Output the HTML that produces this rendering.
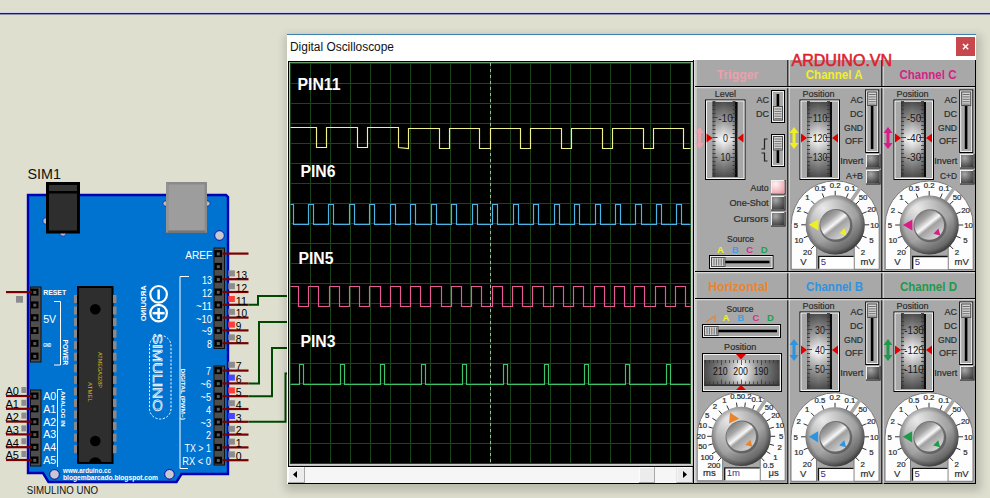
<!DOCTYPE html>
<html><head><meta charset="utf-8"><style>
html,body{margin:0;padding:0;background:#dfdfd0;overflow:hidden;}
svg{display:block;font-family:"Liberation Sans", sans-serif;}
</style></head><body>
<svg width="990" height="498" viewBox="0 0 990 498">
<defs>
<linearGradient id="cylV" x1="0" y1="0" x2="0" y2="1">
<stop offset="0" stop-color="#505050"/><stop offset="0.28" stop-color="#a8a8a8"/><stop offset="0.5" stop-color="#ffffff"/><stop offset="0.72" stop-color="#a8a8a8"/><stop offset="1" stop-color="#505050"/>
</linearGradient>
<linearGradient id="cylH" x1="0" y1="0" x2="1" y2="0">
<stop offset="0" stop-color="#000" stop-opacity="0.45"/><stop offset="0.15" stop-color="#000" stop-opacity="0.1"/><stop offset="0.45" stop-color="#000" stop-opacity="0"/><stop offset="0.8" stop-color="#000" stop-opacity="0.12"/><stop offset="0.91" stop-color="#000" stop-opacity="0.35"/><stop offset="0.92" stop-color="#000" stop-opacity="0.9"/><stop offset="1" stop-color="#000" stop-opacity="0.9"/>
</linearGradient>
<linearGradient id="cylH2" x1="0" y1="0" x2="1" y2="0">
<stop offset="0" stop-color="#4a4a4a"/><stop offset="0.3" stop-color="#9a9a9a"/><stop offset="0.5" stop-color="#ffffff"/><stop offset="0.7" stop-color="#9a9a9a"/><stop offset="1" stop-color="#4a4a4a"/>
</linearGradient>
<linearGradient id="cylV2" x1="0" y1="0" x2="0" y2="1">
<stop offset="0" stop-color="#000" stop-opacity="0.12"/><stop offset="0.25" stop-color="#000" stop-opacity="0.02"/><stop offset="0.5" stop-color="#000" stop-opacity="0"/><stop offset="0.8" stop-color="#000" stop-opacity="0.06"/><stop offset="1" stop-color="#000" stop-opacity="0.22"/>
</linearGradient>
<radialGradient id="knobO" cx="0.4" cy="0.35" r="0.75" fx="0.3" fy="0.22">
<stop offset="0" stop-color="#f0f0f0"/><stop offset="0.45" stop-color="#b8b8b8"/><stop offset="0.85" stop-color="#8a8a8a"/><stop offset="1" stop-color="#5e5e5e"/>
</radialGradient>
<radialGradient id="knobRing" cx="0.5" cy="0.5" r="0.5" fx="0.5" fy="0.5">
<stop offset="0.82" stop-color="#000" stop-opacity="0"/><stop offset="1" stop-color="#000" stop-opacity="0.3"/>
</radialGradient>
<linearGradient id="knobShade" x1="0.2" y1="0.1" x2="0.8" y2="0.95">
<stop offset="0" stop-color="#fff" stop-opacity="0.15"/><stop offset="0.55" stop-color="#000" stop-opacity="0"/><stop offset="1" stop-color="#000" stop-opacity="0.35"/>
</linearGradient>
<linearGradient id="knobI" x1="0.1" y1="0" x2="0.9" y2="1">
<stop offset="0" stop-color="#6a6a6a"/><stop offset="0.3" stop-color="#a8a8a8"/><stop offset="0.47" stop-color="#f8f8f8"/><stop offset="0.56" stop-color="#a0a0a0"/><stop offset="0.8" stop-color="#c8c8c8"/><stop offset="1" stop-color="#e0e0e0"/>
</linearGradient>
<radialGradient id="btn" cx="0.3" cy="0.25" r="0.9">
<stop offset="0" stop-color="#a8a8a8"/><stop offset="0.6" stop-color="#606060"/><stop offset="1" stop-color="#383838"/>
</radialGradient>
<radialGradient id="btnP" cx="0.3" cy="0.25" r="0.9">
<stop offset="0" stop-color="#fff4f4"/><stop offset="0.6" stop-color="#f4c0c4"/><stop offset="1" stop-color="#e89aa0"/>
</radialGradient>
<filter id="sh" x="-5%" y="-5%" width="110%" height="112%"><feGaussianBlur stdDeviation="4"/></filter>
</defs>
<rect x="0" y="0" width="990" height="498" fill="#dfdfd0" />
<rect x="0" y="12" width="990" height="1" fill="#d0d0ee" />
<rect x="0" y="13" width="990" height="1.4" fill="#18186c" />
<polygon points="28,195 226,195 228,197 228,474 181.5,474 176.5,482 48.5,482 43,473 28,473" fill="#0073d0" stroke="#0000b4" stroke-width="2.4"/>
<circle cx="219.5" cy="235.5" r="4.8" fill="#c8c8d0" stroke="#0000a0" stroke-width="0.9"/>
<circle cx="54.5" cy="474.4" r="4.8" fill="#c8c8d0" stroke="#0000a0" stroke-width="0.9"/>
<circle cx="169.5" cy="474.3" r="4.8" fill="#c8c8d0" stroke="#0000a0" stroke-width="0.9"/>
<circle cx="46" cy="221" r="3.2" fill="#b8b8c0" stroke="#0000a0" stroke-width="0.6"/>
<circle cx="63" cy="233" r="3.2" fill="#b8b8c0" stroke="#0000a0" stroke-width="0.6"/>
<circle cx="165.5" cy="203.5" r="2.6" fill="#b8b8c0" stroke="#0000a0" stroke-width="0.6"/>
<circle cx="207.5" cy="203.5" r="2.6" fill="#b8b8c0" stroke="#0000a0" stroke-width="0.6"/>
<rect x="46" y="182" width="34" height="51.5" fill="#000" />
<rect x="49" y="185" width="28" height="6" fill="#343434" />
<rect x="49" y="193.5" width="28" height="37" fill="#2e2e2e" />
<polygon points="166,182 207,182 207,233 166,233" fill="#8a8a8a"/>
<polygon points="168.5,184.5 204.5,184.5 204.5,230.5 168.5,230.5" fill="#9d9d9d"/>
<polygon points="166,233 168.5,230.5 204.5,230.5 207,233" fill="#767676"/>
<polygon points="166,182 168.5,184.5 168.5,230.5 166,233" fill="#939393"/>
<rect x="78" y="287" width="34.5" height="176" fill="#2e2e2e" stroke="#000" stroke-width="2"/>
<rect x="74" y="295.0" width="3" height="8" fill="#8c8888" />
<rect x="113" y="295.0" width="3.5" height="8" fill="#8c8888" />
<rect x="74" y="306.55" width="3" height="8" fill="#8c8888" />
<rect x="113" y="306.55" width="3.5" height="8" fill="#8c8888" />
<rect x="74" y="318.1" width="3" height="8" fill="#8c8888" />
<rect x="113" y="318.1" width="3.5" height="8" fill="#8c8888" />
<rect x="74" y="329.65" width="3" height="8" fill="#8c8888" />
<rect x="113" y="329.65" width="3.5" height="8" fill="#8c8888" />
<rect x="74" y="341.2" width="3" height="8" fill="#8c8888" />
<rect x="113" y="341.2" width="3.5" height="8" fill="#8c8888" />
<rect x="74" y="352.75" width="3" height="8" fill="#8c8888" />
<rect x="113" y="352.75" width="3.5" height="8" fill="#8c8888" />
<rect x="74" y="364.3" width="3" height="8" fill="#8c8888" />
<rect x="113" y="364.3" width="3.5" height="8" fill="#8c8888" />
<rect x="74" y="375.85" width="3" height="8" fill="#8c8888" />
<rect x="113" y="375.85" width="3.5" height="8" fill="#8c8888" />
<rect x="74" y="387.4" width="3" height="8" fill="#8c8888" />
<rect x="113" y="387.4" width="3.5" height="8" fill="#8c8888" />
<rect x="74" y="398.95" width="3" height="8" fill="#8c8888" />
<rect x="113" y="398.95" width="3.5" height="8" fill="#8c8888" />
<rect x="74" y="410.5" width="3" height="8" fill="#8c8888" />
<rect x="113" y="410.5" width="3.5" height="8" fill="#8c8888" />
<rect x="74" y="422.05" width="3" height="8" fill="#8c8888" />
<rect x="113" y="422.05" width="3.5" height="8" fill="#8c8888" />
<rect x="74" y="433.6" width="3" height="8" fill="#8c8888" />
<rect x="113" y="433.6" width="3.5" height="8" fill="#8c8888" />
<rect x="74" y="445.15" width="3" height="8" fill="#8c8888" />
<rect x="113" y="445.15" width="3.5" height="8" fill="#8c8888" />
<circle cx="95.3" cy="309.3" r="5.3" fill="#000"/>
<circle cx="95.3" cy="441" r="5.3" fill="#000"/>
<path d="M89,463.5 A6.3,6.3 0 0 1 101.6,463.5 Z" fill="#000"/>
<text x="0" y="0" font-size="4.5" fill="#c8b820" font-weight="normal" textLength="20" lengthAdjust="spacingAndGlyphs" transform="translate(88,382) rotate(90)">ATMEL</text>
<text x="0" y="0" font-size="4.5" fill="#c8b820" font-weight="normal" textLength="36" lengthAdjust="spacingAndGlyphs" transform="translate(97.5,352) rotate(90)">ATMEGA328P</text>
<rect x="214" y="248" width="10.5" height="100.5" fill="#4e4e4e" stroke="#111" stroke-width="1"/>
<rect x="214.5" y="250.1" width="7.5" height="7" fill="#000" />
<rect x="216.8" y="252.4" width="3" height="3" fill="#5a5a5a" />
<rect x="214.5" y="262.9" width="7.5" height="7" fill="#000" />
<rect x="216.8" y="265.2" width="3" height="3" fill="#5a5a5a" />
<rect x="214.5" y="275.7" width="7.5" height="7" fill="#000" />
<rect x="216.8" y="278.0" width="3" height="3" fill="#5a5a5a" />
<rect x="214.5" y="288.5" width="7.5" height="7" fill="#000" />
<rect x="216.8" y="290.8" width="3" height="3" fill="#5a5a5a" />
<rect x="214.5" y="301.3" width="7.5" height="7" fill="#000" />
<rect x="216.8" y="303.6" width="3" height="3" fill="#5a5a5a" />
<rect x="214.5" y="314.1" width="7.5" height="7" fill="#000" />
<rect x="216.8" y="316.40000000000003" width="3" height="3" fill="#5a5a5a" />
<rect x="214.5" y="326.9" width="7.5" height="7" fill="#000" />
<rect x="216.8" y="329.2" width="3" height="3" fill="#5a5a5a" />
<rect x="214.5" y="339.7" width="7.5" height="7" fill="#000" />
<rect x="216.8" y="342.0" width="3" height="3" fill="#5a5a5a" />
<rect x="214" y="366" width="10.5" height="99" fill="#4e4e4e" stroke="#111" stroke-width="1"/>
<rect x="214.5" y="367.1" width="7.5" height="7" fill="#000" />
<rect x="216.8" y="369.40000000000003" width="3" height="3" fill="#5a5a5a" />
<rect x="214.5" y="379.90000000000003" width="7.5" height="7" fill="#000" />
<rect x="216.8" y="382.20000000000005" width="3" height="3" fill="#5a5a5a" />
<rect x="214.5" y="392.70000000000005" width="7.5" height="7" fill="#000" />
<rect x="216.8" y="395.00000000000006" width="3" height="3" fill="#5a5a5a" />
<rect x="214.5" y="405.5" width="7.5" height="7" fill="#000" />
<rect x="216.8" y="407.8" width="3" height="3" fill="#5a5a5a" />
<rect x="214.5" y="418.3" width="7.5" height="7" fill="#000" />
<rect x="216.8" y="420.6" width="3" height="3" fill="#5a5a5a" />
<rect x="214.5" y="431.1" width="7.5" height="7" fill="#000" />
<rect x="216.8" y="433.40000000000003" width="3" height="3" fill="#5a5a5a" />
<rect x="214.5" y="443.90000000000003" width="7.5" height="7" fill="#000" />
<rect x="216.8" y="446.20000000000005" width="3" height="3" fill="#5a5a5a" />
<rect x="214.5" y="456.70000000000005" width="7.5" height="7" fill="#000" />
<rect x="216.8" y="459.00000000000006" width="3" height="3" fill="#5a5a5a" />
<rect x="30.5" y="287" width="10.5" height="75" fill="#4e4e4e" stroke="#111" stroke-width="1"/>
<rect x="31.0" y="288.6" width="7.5" height="7" fill="#000" />
<rect x="33.3" y="290.90000000000003" width="3" height="3" fill="#5a5a5a" />
<rect x="31.0" y="301.40000000000003" width="7.5" height="7" fill="#000" />
<rect x="33.3" y="303.70000000000005" width="3" height="3" fill="#5a5a5a" />
<rect x="31.0" y="314.20000000000005" width="7.5" height="7" fill="#000" />
<rect x="33.3" y="316.50000000000006" width="3" height="3" fill="#5a5a5a" />
<rect x="31.0" y="327.0" width="7.5" height="7" fill="#000" />
<rect x="33.3" y="329.3" width="3" height="3" fill="#5a5a5a" />
<rect x="31.0" y="339.8" width="7.5" height="7" fill="#000" />
<rect x="33.3" y="342.1" width="3" height="3" fill="#5a5a5a" />
<rect x="31.0" y="352.6" width="7.5" height="7" fill="#000" />
<rect x="33.3" y="354.90000000000003" width="3" height="3" fill="#5a5a5a" />
<rect x="30.5" y="390" width="10.5" height="76" fill="#4e4e4e" stroke="#111" stroke-width="1"/>
<rect x="31.0" y="392.5" width="7.5" height="7" fill="#000" />
<rect x="33.3" y="394.8" width="3" height="3" fill="#5a5a5a" />
<rect x="31.0" y="405.3" width="7.5" height="7" fill="#000" />
<rect x="33.3" y="407.6" width="3" height="3" fill="#5a5a5a" />
<rect x="31.0" y="418.1" width="7.5" height="7" fill="#000" />
<rect x="33.3" y="420.40000000000003" width="3" height="3" fill="#5a5a5a" />
<rect x="31.0" y="430.9" width="7.5" height="7" fill="#000" />
<rect x="33.3" y="433.2" width="3" height="3" fill="#5a5a5a" />
<rect x="31.0" y="443.7" width="7.5" height="7" fill="#000" />
<rect x="33.3" y="446.0" width="3" height="3" fill="#5a5a5a" />
<rect x="31.0" y="456.5" width="7.5" height="7" fill="#000" />
<rect x="33.3" y="458.8" width="3" height="3" fill="#5a5a5a" />
<rect x="222.5" y="252.5" width="26" height="2.2" fill="#780000" />
<rect x="222.5" y="278.09999999999997" width="26" height="2.2" fill="#780000" />
<rect x="222.5" y="290.9" width="26" height="2.2" fill="#780000" />
<rect x="222.5" y="303.7" width="26" height="2.2" fill="#780000" />
<rect x="222.5" y="316.5" width="26" height="2.2" fill="#780000" />
<rect x="222.5" y="329.29999999999995" width="26" height="2.2" fill="#780000" />
<rect x="222.5" y="342.09999999999997" width="26" height="2.2" fill="#780000" />
<rect x="222.5" y="369.5" width="26" height="2.2" fill="#780000" />
<rect x="222.5" y="382.3" width="26" height="2.2" fill="#780000" />
<rect x="222.5" y="395.1" width="26" height="2.2" fill="#780000" />
<rect x="222.5" y="407.9" width="26" height="2.2" fill="#780000" />
<rect x="222.5" y="420.7" width="26" height="2.2" fill="#780000" />
<rect x="222.5" y="433.5" width="26" height="2.2" fill="#780000" />
<rect x="222.5" y="446.3" width="26" height="2.2" fill="#780000" />
<rect x="222.5" y="459.1" width="26" height="2.2" fill="#780000" />
<rect x="228.3" y="270.4" width="6.6" height="6" fill="#8c8c8c" />
<text x="235.8" y="278.9" font-size="10.5" fill="#000" text-anchor="start" font-weight="normal" textLength="11.2" lengthAdjust="spacingAndGlyphs" >13</text>
<rect x="228.3" y="283.2" width="6.6" height="6" fill="#8c8c8c" />
<text x="235.8" y="291.7" font-size="10.5" fill="#000" text-anchor="start" font-weight="normal" textLength="11.2" lengthAdjust="spacingAndGlyphs" >12</text>
<rect x="228.3" y="296.0" width="6.6" height="6" fill="#ff3c3c" />
<text x="235.8" y="304.5" font-size="10.5" fill="#000" text-anchor="start" font-weight="normal" textLength="11.2" lengthAdjust="spacingAndGlyphs" >11</text>
<rect x="228.3" y="308.8" width="6.6" height="6" fill="#8c8c8c" />
<text x="235.8" y="317.3" font-size="10.5" fill="#000" text-anchor="start" font-weight="normal" textLength="11.2" lengthAdjust="spacingAndGlyphs" >10</text>
<rect x="228.3" y="321.59999999999997" width="6.6" height="6" fill="#ff3c3c" />
<text x="235.8" y="330.09999999999997" font-size="10.5" fill="#000" text-anchor="start" font-weight="normal" textLength="5.6" lengthAdjust="spacingAndGlyphs" >9</text>
<rect x="228.3" y="334.4" width="6.6" height="6" fill="#8c8c8c" />
<text x="235.8" y="342.9" font-size="10.5" fill="#000" text-anchor="start" font-weight="normal" textLength="5.6" lengthAdjust="spacingAndGlyphs" >8</text>
<rect x="228.3" y="361.8" width="6.6" height="6" fill="#8c8c8c" />
<text x="235.8" y="370.3" font-size="10.5" fill="#000" text-anchor="start" font-weight="normal" >7</text>
<rect x="228.3" y="374.6" width="6.6" height="6" fill="#4646ff" />
<text x="235.8" y="383.1" font-size="10.5" fill="#000" text-anchor="start" font-weight="normal" >6</text>
<rect x="228.3" y="387.40000000000003" width="6.6" height="6" fill="#ff3c3c" />
<text x="235.8" y="395.90000000000003" font-size="10.5" fill="#000" text-anchor="start" font-weight="normal" >5</text>
<rect x="228.3" y="400.2" width="6.6" height="6" fill="#8c8c8c" />
<text x="235.8" y="408.7" font-size="10.5" fill="#000" text-anchor="start" font-weight="normal" >4</text>
<rect x="228.3" y="413.0" width="6.6" height="6" fill="#4646ff" />
<text x="235.8" y="421.5" font-size="10.5" fill="#000" text-anchor="start" font-weight="normal" >3</text>
<rect x="228.3" y="425.8" width="6.6" height="6" fill="#8c8c8c" />
<text x="235.8" y="434.3" font-size="10.5" fill="#000" text-anchor="start" font-weight="normal" >2</text>
<rect x="228.3" y="438.6" width="6.6" height="6" fill="#8c8c8c" />
<text x="235.8" y="447.1" font-size="10.5" fill="#000" text-anchor="start" font-weight="normal" >1</text>
<rect x="228.3" y="451.40000000000003" width="6.6" height="6" fill="#8c8c8c" />
<text x="235.8" y="459.90000000000003" font-size="10.5" fill="#000" text-anchor="start" font-weight="normal" >0</text>
<rect x="6" y="291.0" width="26" height="2.2" fill="#780000" />
<rect x="16" y="296" width="7" height="6.7" fill="#8c8c8c" />
<rect x="6" y="394.9" width="26" height="2.2" fill="#780000" />
<rect x="21.4" y="387.0" width="5" height="6" fill="#8c8c8c" />
<text x="5.5" y="395.4" font-size="11" fill="#000" text-anchor="start" font-weight="normal" textLength="13.5" lengthAdjust="spacingAndGlyphs" >A0</text>
<rect x="6" y="407.7" width="26" height="2.2" fill="#780000" />
<rect x="21.4" y="399.8" width="5" height="6" fill="#8c8c8c" />
<text x="5.5" y="408.2" font-size="11" fill="#000" text-anchor="start" font-weight="normal" textLength="13.5" lengthAdjust="spacingAndGlyphs" >A1</text>
<rect x="6" y="420.5" width="26" height="2.2" fill="#780000" />
<rect x="21.4" y="412.6" width="5" height="6" fill="#8c8c8c" />
<text x="5.5" y="421.0" font-size="11" fill="#000" text-anchor="start" font-weight="normal" textLength="13.5" lengthAdjust="spacingAndGlyphs" >A2</text>
<rect x="6" y="433.29999999999995" width="26" height="2.2" fill="#780000" />
<rect x="21.4" y="425.4" width="5" height="6" fill="#8c8c8c" />
<text x="5.5" y="433.79999999999995" font-size="11" fill="#000" text-anchor="start" font-weight="normal" textLength="13.5" lengthAdjust="spacingAndGlyphs" >A3</text>
<rect x="6" y="446.09999999999997" width="26" height="2.2" fill="#780000" />
<rect x="21.4" y="438.2" width="5" height="6" fill="#8c8c8c" />
<text x="5.5" y="446.59999999999997" font-size="11" fill="#000" text-anchor="start" font-weight="normal" textLength="13.5" lengthAdjust="spacingAndGlyphs" >A4</text>
<rect x="6" y="458.9" width="26" height="2.2" fill="#780000" />
<rect x="21.4" y="451.0" width="5" height="6" fill="#8c8c8c" />
<text x="5.5" y="459.4" font-size="11" fill="#000" text-anchor="start" font-weight="normal" textLength="13.5" lengthAdjust="spacingAndGlyphs" >A5</text>
<text x="212.2" y="259.1" font-size="10" fill="#ffffff" text-anchor="end" font-weight="normal" textLength="27" lengthAdjust="spacingAndGlyphs" >AREF</text>
<text x="212" y="284.2" font-size="10" fill="#ffffff" text-anchor="end" font-weight="normal" textLength="10" lengthAdjust="spacingAndGlyphs" >13</text>
<text x="212" y="297.0" font-size="10" fill="#ffffff" text-anchor="end" font-weight="normal" textLength="10" lengthAdjust="spacingAndGlyphs" >12</text>
<text x="212" y="309.8" font-size="10" fill="#ffffff" text-anchor="end" font-weight="normal" textLength="16" lengthAdjust="spacingAndGlyphs" >~11</text>
<text x="212" y="322.6" font-size="10" fill="#ffffff" text-anchor="end" font-weight="normal" textLength="16" lengthAdjust="spacingAndGlyphs" >~10</text>
<text x="212" y="335.4" font-size="10" fill="#ffffff" text-anchor="end" font-weight="normal" textLength="10.5" lengthAdjust="spacingAndGlyphs" >~9</text>
<text x="212" y="348.2" font-size="10" fill="#ffffff" text-anchor="end" font-weight="normal" textLength="5" lengthAdjust="spacingAndGlyphs" >8</text>
<text x="211" y="375.40000000000003" font-size="10" fill="#ffffff" text-anchor="end" font-weight="normal" textLength="5" lengthAdjust="spacingAndGlyphs" >7</text>
<text x="211" y="388.20000000000005" font-size="10" fill="#ffffff" text-anchor="end" font-weight="normal" textLength="10.5" lengthAdjust="spacingAndGlyphs" >~6</text>
<text x="211" y="401.00000000000006" font-size="10" fill="#ffffff" text-anchor="end" font-weight="normal" textLength="10.5" lengthAdjust="spacingAndGlyphs" >~5</text>
<text x="211" y="413.8" font-size="10" fill="#ffffff" text-anchor="end" font-weight="normal" textLength="5" lengthAdjust="spacingAndGlyphs" >4</text>
<text x="211" y="426.6" font-size="10" fill="#ffffff" text-anchor="end" font-weight="normal" textLength="10.5" lengthAdjust="spacingAndGlyphs" >~3</text>
<text x="211" y="439.40000000000003" font-size="10" fill="#ffffff" text-anchor="end" font-weight="normal" textLength="5" lengthAdjust="spacingAndGlyphs" >2</text>
<text x="211" y="452.20000000000005" font-size="10" fill="#ffffff" text-anchor="end" font-weight="normal" textLength="26.5" lengthAdjust="spacingAndGlyphs" >TX &gt; 1</text>
<text x="211" y="465.00000000000006" font-size="10" fill="#ffffff" text-anchor="end" font-weight="normal" textLength="28.7" lengthAdjust="spacingAndGlyphs" >RX &lt; 0</text>
<text x="43.2" y="295" font-size="7" fill="#ffffff" text-anchor="start" font-weight="bold" textLength="23" lengthAdjust="spacingAndGlyphs" >RESET</text>
<text x="43.2" y="323.2" font-size="10" fill="#ffffff" text-anchor="start" font-weight="normal" textLength="13" lengthAdjust="spacingAndGlyphs" >5V</text>
<text x="43.2" y="346.8" font-size="5.5" fill="#ffffff" text-anchor="start" font-weight="bold" textLength="8" lengthAdjust="spacingAndGlyphs" >GND</text>
<text x="43.2" y="400.0" font-size="11" fill="#ffffff" text-anchor="start" font-weight="normal" textLength="13" lengthAdjust="spacingAndGlyphs" >A0</text>
<text x="43.2" y="412.8" font-size="11" fill="#ffffff" text-anchor="start" font-weight="normal" textLength="13" lengthAdjust="spacingAndGlyphs" >A1</text>
<text x="43.2" y="425.6" font-size="11" fill="#ffffff" text-anchor="start" font-weight="normal" textLength="13" lengthAdjust="spacingAndGlyphs" >A2</text>
<text x="43.2" y="438.4" font-size="11" fill="#ffffff" text-anchor="start" font-weight="normal" textLength="13" lengthAdjust="spacingAndGlyphs" >A3</text>
<text x="43.2" y="451.2" font-size="11" fill="#ffffff" text-anchor="start" font-weight="normal" textLength="13" lengthAdjust="spacingAndGlyphs" >A4</text>
<text x="43.2" y="464.0" font-size="11" fill="#ffffff" text-anchor="start" font-weight="normal" textLength="13" lengthAdjust="spacingAndGlyphs" >A5</text>
<path d="M54,301.5 H60.5 V365 H54" fill="none" stroke="#fff" stroke-width="1"/>
<path d="M62,389.5 H57.5 V467" fill="none" stroke="#fff" stroke-width="1"/>
<path d="M189,276.5 H180 V468.5 H188" fill="none" stroke="#fff" stroke-width="1"/>
<text x="0" y="0" font-size="7" fill="#ffffff" font-weight="bold" textLength="25.7" lengthAdjust="spacingAndGlyphs" transform="translate(63,339.5) rotate(90)">POWER</text>
<text x="0" y="0" font-size="6" fill="#ffffff" font-weight="bold" textLength="35.5" lengthAdjust="spacingAndGlyphs" transform="translate(61,391) rotate(90)">ANALOG IN</text>
<text x="0" y="0" font-size="6" fill="#ffffff" font-weight="bold" textLength="51.6" lengthAdjust="spacingAndGlyphs" transform="translate(181,368.4) rotate(90)">DIGITAL (PWM~)</text>
<text x="0" y="0" font-size="6.5" fill="#fff" font-weight="bold" textLength="36" lengthAdjust="spacingAndGlyphs" transform="translate(146,285.3) rotate(90) scale(1,-1)">ARDUINO</text>
<circle cx="158.6" cy="294.3" r="8.3" fill="none" stroke="#fff" stroke-width="2.2"/>
<circle cx="158.6" cy="313.1" r="8.3" fill="none" stroke="#fff" stroke-width="2.2"/>
<rect x="157.4" y="289.5" width="2.5" height="10" fill="#fff" />
<rect x="152.6" y="311.9" width="12" height="2.5" fill="#fff" />
<rect x="157.4" y="308" width="2.5" height="11" fill="#fff" />
<rect x="149.5" y="335.5" width="21.5" height="83.5" rx="10.5" ry="10.5" fill="none" stroke="#fff" stroke-width="1" stroke-dasharray="2.2,1.6"/>
<text x="0" y="0" font-size="13.5" fill="none" stroke="#fff" stroke-width="0.65" font-weight="normal" textLength="78" lengthAdjust="spacingAndGlyphs" transform="translate(153,333.5) rotate(90)">SIMULINO</text>
<text x="63" y="472.5" font-size="7" fill="#ffffff" text-anchor="start" font-weight="bold" textLength="48" lengthAdjust="spacingAndGlyphs" >www.arduino.cc</text>
<text x="63" y="479.5" font-size="7" fill="#ffffff" text-anchor="start" font-weight="bold" textLength="95" lengthAdjust="spacingAndGlyphs" >blogembarcado.blogspot.com</text>
<text x="27.5" y="179" font-size="14.5" fill="#111" text-anchor="start" font-weight="normal" textLength="33.5" lengthAdjust="spacingAndGlyphs" >SIM1</text>
<text x="26.8" y="493.6" font-size="10.6" fill="#111" text-anchor="start" font-weight="normal" textLength="71.2" lengthAdjust="spacingAndGlyphs" >SIMULINO UNO</text>
<path d="M248.5,304.8 L258,304.8 L258,296 L288,296" fill="none" stroke="#004800" stroke-width="2"/>
<path d="M248.5,383.40000000000003 L259,383.40000000000003 L259,322 L288,322" fill="none" stroke="#004800" stroke-width="2"/>
<path d="M248.5,396.20000000000005 L272,396.20000000000005 L272,348 L288,348" fill="none" stroke="#004800" stroke-width="2"/>
<path d="M248.5,421.8 L285.5,421.8 L285.5,373.5 L288,373.5" fill="none" stroke="#004800" stroke-width="2"/>
<rect x="285" y="35" width="696" height="456" fill="#000" opacity="0.17" filter="url(#sh)"/>
<rect x="287" y="34" width="689" height="450" fill="#fff" />
<rect x="287" y="34" width="689" height="1" fill="#3c7fb1" />
<text x="290" y="51" font-size="12.5" fill="#111" text-anchor="start" font-weight="normal" textLength="104" lengthAdjust="spacingAndGlyphs" >Digital Oscilloscope</text>
<rect x="956" y="37" width="19" height="19" fill="#c7474d" />
<path d="M963,44 L968.2,49.2 M968.2,44 L963,49.2" stroke="#fff" stroke-width="1.5"/>
<rect x="288" y="61" width="405" height="423" fill="#bdbdbd" />
<rect x="288" y="61" width="405" height="1" fill="#000" />
<rect x="288" y="61" width="1" height="405" fill="#000" />
<rect x="289" y="62" width="403" height="403" fill="#000" />
<path d="M290.5,62.5 V463.5 M310.5,62.5 V463.5 M330.5,62.5 V463.5 M350.5,62.5 V463.5 M370.5,62.5 V463.5 M390.5,62.5 V463.5 M410.5,62.5 V463.5 M430.5,62.5 V463.5 M450.5,62.5 V463.5 M470.5,62.5 V463.5 M490.5,62.5 V463.5 M510.5,62.5 V463.5 M530.5,62.5 V463.5 M550.5,62.5 V463.5 M570.5,62.5 V463.5 M590.5,62.5 V463.5 M610.5,62.5 V463.5 M630.5,62.5 V463.5 M650.5,62.5 V463.5 M670.5,62.5 V463.5 M690.5,62.5 V463.5 M290,63.5 H691 M290,83.5 H691 M290,103.5 H691 M290,123.5 H691 M290,143.5 H691 M290,163.5 H691 M290,183.5 H691 M290,203.5 H691 M290,223.5 H691 M290,243.5 H691 M290,263.5 H691 M290,283.5 H691 M290,303.5 H691 M290,323.5 H691 M290,343.5 H691 M290,363.5 H691 M290,383.5 H691 M290,403.5 H691 M290,423.5 H691 M290,443.5 H691 M290,463.5 H691" stroke="#1a441a" stroke-width="1"/>
<rect x="289" y="62" width="402" height="1" fill="#6a9a6a" />
<rect x="289" y="62" width="1" height="402" fill="#b4bcb4" />
<line x1="490.5" y1="63" x2="490.5" y2="463" stroke="#b0b0b0" stroke-width="1" stroke-dasharray="3,3"/>
<rect x="691" y="62" width="1" height="403" fill="#cfcfcf" />
<rect x="289" y="464" width="403" height="1" fill="#cfcfcf" />
<rect x="288" y="466" width="405" height="1" fill="#000" />
<rect x="288" y="467" width="405" height="16" fill="#f6f6f6" />
<rect x="288" y="483" width="405" height="1" fill="#000" />
<rect x="288" y="467" width="17" height="16" fill="#a8a8a8" />
<rect x="288" y="467" width="16" height="15" fill="#fcfcfc" />
<rect x="289" y="468" width="15" height="14" fill="#ececec" />
<rect x="639" y="467" width="16" height="16" fill="#a8a8a8" />
<rect x="639" y="467" width="15" height="15" fill="#fcfcfc" />
<rect x="640" y="468" width="14" height="14" fill="#ececec" />
<rect x="676.5" y="467" width="16.5" height="16" fill="#a8a8a8" />
<rect x="676.5" y="467" width="15.5" height="15" fill="#fcfcfc" />
<rect x="677.5" y="468" width="14.5" height="14" fill="#ececec" />
<polygon points="297,471 293,474.5 297,478" fill="#000"/>
<polygon points="683,471 687,474.5 683,478" fill="#000"/>
<path d="M290.5,127.5 L316.5,127.5 L316.5,147.5 L326.5,147.5 L326.5,127.5 L357.5,127.5 L357.5,147.5 L367.5,147.5 L367.5,127.5 L398.5,127.5 L398.5,147.5 L408.5,148.5 L408.5,128.5 L439.5,128.5 L439.5,148.5 L449.5,148.5 L449.5,128.5 L479.5,128.5 L479.5,148.5 L490.5,148.5 L490.5,128.5 L520.5,128.5 L520.5,148.5 L530.5,148.5 L530.5,128.5 L561.5,128.5 L561.5,148.5 L571.5,148.5 L571.5,128.5 L602.5,128.5 L602.5,148.5 L612.5,148.5 L612.5,128.5 L643.5,128.5 L643.5,148.5 L653.5,148.5 L653.5,128.5 L683.5,128.5 L683.5,148.5 L690.5,148.5" fill="none" stroke="#f2f28a" stroke-width="1.15"/>
<path d="M290.5,204.5 L293.5,204.5 L293.5,224.5 L308.5,224.5 L308.5,204.5 L313.5,204.5 L313.5,224.5 L328.5,224.5 L328.5,204.5 L333.5,204.5 L333.5,224.5 L349.5,224.5 L349.5,204.5 L354.5,204.5 L354.5,224.5 L369.5,224.5 L369.5,204.5 L374.5,204.5 L374.5,224.5 L390.5,224.5 L390.5,204.5 L395.5,204.5 L395.5,224.5 L410.5,224.5 L410.5,204.5 L415.5,204.5 L415.5,224.5 L431.5,224.5 L431.5,204.5 L436.5,204.5 L436.5,224.5 L451.5,224.5 L451.5,204.5 L456.5,204.5 L456.5,224.5 L472.5,224.5 L472.5,204.5 L477.5,204.5 L477.5,224.5 L492.5,224.5 L492.5,204.5 L497.5,204.5 L497.5,224.5 L513.5,224.5 L513.5,204.5 L518.5,204.5 L518.5,224.5 L533.5,224.5 L533.5,204.5 L538.5,204.5 L538.5,224.5 L554.5,224.5 L554.5,204.5 L559.5,204.5 L559.5,224.5 L574.5,224.5 L574.5,204.5 L579.5,204.5 L579.5,224.5 L595.5,224.5 L595.5,204.5 L600.5,204.5 L600.5,224.5 L615.5,224.5 L615.5,204.5 L620.5,204.5 L620.5,224.5 L635.5,224.5 L635.5,204.5 L641.5,204.5 L641.5,224.5 L656.5,224.5 L656.5,204.5 L661.5,204.5 L661.5,224.5 L676.5,224.5 L676.5,204.5 L681.5,204.5 L681.5,224.5 L690.5,224.5" fill="none" stroke="#4ab4e6" stroke-width="1.15"/>
<path d="M290.5,286.5 L298.5,286.5 L298.5,306.5 L308.5,306.5 L308.5,286.5 L318.5,286.5 L318.5,306.5 L329.5,306.5 L329.5,286.5 L339.5,286.5 L339.5,306.5 L349.5,306.5 L349.5,286.5 L359.5,286.5 L359.5,306.5 L369.5,306.5 L369.5,286.5 L380.5,286.5 L380.5,306.5 L390.5,306.5 L390.5,286.5 L400.5,286.5 L400.5,306.5 L410.5,306.5 L410.5,286.5 L420.5,286.5 L420.5,306.5 L430.5,306.5 L430.5,286.5 L441.5,286.5 L441.5,306.5 L451.5,306.5 L451.5,286.5 L461.5,286.5 L461.5,306.5 L471.5,306.5 L471.5,286.5 L481.5,286.5 L481.5,306.5 L492.5,306.5 L492.5,286.5 L502.5,286.5 L502.5,306.5 L512.5,306.5 L512.5,286.5 L522.5,286.5 L522.5,306.5 L532.5,306.5 L532.5,286.5 L543.5,286.5 L543.5,306.5 L553.5,306.5 L553.5,286.5 L563.5,286.5 L563.5,306.5 L573.5,306.5 L573.5,286.5 L583.5,286.5 L583.5,306.5 L594.5,306.5 L594.5,286.5 L604.5,286.5 L604.5,306.5 L614.5,306.5 L614.5,286.5 L624.5,286.5 L624.5,306.5 L634.5,306.5 L634.5,286.5 L644.5,286.5 L644.5,306.5 L655.5,306.5 L655.5,286.5 L665.5,286.5 L665.5,306.5 L675.5,306.5 L675.5,286.5 L685.5,286.5 L685.5,306.5 L690.5,306.5" fill="none" stroke="#e85a96" stroke-width="1.15"/>
<path d="M290.5,384.5 L299.5,384.5 L299.5,364.5 L303.5,364.5 L303.5,384.5 L340.5,384.5 L340.5,364.5 L344.5,364.5 L344.5,384.5 L380.5,384.5 L380.5,364.5 L384.5,364.5 L384.5,384.5 L421.5,384.5 L421.5,364.5 L425.5,364.5 L425.5,384.5 L462.5,384.5 L462.5,364.5 L466.5,364.5 L466.5,384.5 L503.5,384.5 L503.5,364.5 L507.5,364.5 L507.5,384.5 L544.5,384.5 L544.5,364.5 L548.5,364.5 L548.5,384.5 L584.5,384.5 L584.5,364.5 L588.5,364.5 L588.5,384.5 L625.5,384.5 L625.5,364.5 L629.5,364.5 L629.5,384.5 L666.5,384.5 L666.5,364.5 L670.5,364.5 L670.5,384.5 L690.5,384.5" fill="none" stroke="#3cc46a" stroke-width="1.15"/>
<text x="297.5" y="89.7" font-size="16" fill="#fff" text-anchor="start" font-weight="bold" textLength="43" lengthAdjust="spacingAndGlyphs" >PIN11</text>
<text x="300.5" y="176.7" font-size="16" fill="#fff" text-anchor="start" font-weight="bold" textLength="35" lengthAdjust="spacingAndGlyphs" >PIN6</text>
<text x="298.5" y="263.8" font-size="16" fill="#fff" text-anchor="start" font-weight="bold" textLength="35" lengthAdjust="spacingAndGlyphs" >PIN5</text>
<text x="300.5" y="346.6" font-size="16" fill="#fff" text-anchor="start" font-weight="bold" textLength="35" lengthAdjust="spacingAndGlyphs" >PIN3</text>
<rect x="693" y="60" width="283" height="424" fill="#a8a8a8" />
<rect x="693" y="60" width="1.2" height="424" fill="#000" />
<rect x="694.2" y="60" width="1" height="424" fill="#f0f0f0" />
<rect x="695.2" y="60" width="1.5" height="424" fill="#cfcfcf" />
<rect x="975" y="60" width="1" height="424" fill="#000" />
<rect x="693" y="483" width="283" height="1" fill="#000" />
<rect x="787.3" y="60" width="1.3" height="424" fill="#000" />
<rect x="788.5999999999999" y="60" width="1" height="424" fill="#ececec" />
<rect x="881.3" y="60" width="1.3" height="424" fill="#000" />
<rect x="882.5999999999999" y="60" width="1" height="424" fill="#ececec" />
<rect x="695" y="86" width="280" height="1.2" fill="#000" />
<rect x="695" y="87.2" width="280" height="1" fill="#ececec" />
<rect x="695" y="271" width="280" height="1.2" fill="#000" />
<rect x="695" y="272.2" width="280" height="1" fill="#ececec" />
<rect x="695" y="298" width="280" height="1.2" fill="#000" />
<rect x="695" y="299.2" width="280" height="1" fill="#ececec" />
<text x="737.5" y="78.7" font-size="12.5" fill="#eca0ac" text-anchor="middle" font-weight="bold" textLength="41.5" lengthAdjust="spacingAndGlyphs" >Trigger</text>
<text x="834.2" y="78.5" font-size="12" fill="#f0f028" text-anchor="middle" font-weight="bold" textLength="57" lengthAdjust="spacingAndGlyphs" >Channel A</text>
<text x="928" y="78.5" font-size="12" fill="#d81e86" text-anchor="middle" font-weight="bold" textLength="57" lengthAdjust="spacingAndGlyphs" >Channel C</text>
<text x="738.2" y="290.5" font-size="12" fill="#e8842e" text-anchor="middle" font-weight="bold" textLength="60" lengthAdjust="spacingAndGlyphs" >Horizontal</text>
<text x="834.6" y="291" font-size="12" fill="#2e94e0" text-anchor="middle" font-weight="bold" textLength="57" lengthAdjust="spacingAndGlyphs" >Channel B</text>
<text x="928.5" y="291" font-size="12" fill="#1e9a4a" text-anchor="middle" font-weight="bold" textLength="57" lengthAdjust="spacingAndGlyphs" >Channel D</text>
<text x="791.5" y="65.7" font-size="16" fill="#e0202c" text-anchor="start" font-weight="normal" textLength="100.6" lengthAdjust="spacingAndGlyphs" stroke="#e0202c" stroke-width="0.55">ARDUINO.VN</text>
<rect x="705.5" y="100.0" width="39.5" height="79.5" fill="#a8a8a8" stroke="#000" stroke-width="1"/>
<rect x="706.5" y="101.0" width="37.5" height="77.5" fill="none" stroke="#f4f4f4" stroke-width="1"/>
<rect x="712.5" y="102.0" width="25" height="75" fill="url(#cylV)"/>
<rect x="712.5" y="102.0" width="25" height="75" fill="url(#cylH)"/>
<path d="M712.5,101.5 h3 M735.5,101.5 h-3 M712.5,105.5 h3 M735.5,105.5 h-3 M712.5,109.5 h3 M735.5,109.5 h-3 M712.5,113.5 h3 M735.5,113.5 h-3 M712.5,117.5 h5 M735.5,117.5 h-5 M712.5,121.5 h3 M735.5,121.5 h-3 M712.5,125.5 h3 M735.5,125.5 h-3 M712.5,129.5 h3 M735.5,129.5 h-3 M712.5,133.5 h3 M735.5,133.5 h-3 M712.5,137.5 h5 M735.5,137.5 h-5 M712.5,141.5 h3 M735.5,141.5 h-3 M712.5,145.5 h3 M735.5,145.5 h-3 M712.5,149.5 h3 M735.5,149.5 h-3 M712.5,153.5 h3 M735.5,153.5 h-3 M712.5,157.5 h5 M735.5,157.5 h-5 M712.5,161.5 h3 M735.5,161.5 h-3 M712.5,165.5 h3 M735.5,165.5 h-3 M712.5,169.5 h3 M735.5,169.5 h-3 M712.5,173.5 h3 M735.5,173.5 h-3" stroke="#3a3a3a" stroke-width="0.9"/>
<text x="725.5" y="121.7" font-size="10" fill="#1a1a1a" text-anchor="middle" font-weight="normal" textLength="14.700000000000001" lengthAdjust="spacingAndGlyphs" >-10</text>
<text x="725.5" y="141.5" font-size="10" fill="#1a1a1a" text-anchor="middle" font-weight="normal" textLength="4.9" lengthAdjust="spacingAndGlyphs" >0</text>
<text x="725.5" y="161.3" font-size="10" fill="#1a1a1a" text-anchor="middle" font-weight="normal" textLength="9.8" lengthAdjust="spacingAndGlyphs" >10</text>
<polygon points="706.5,133.4 712.5,137.9 706.5,142.4" fill="#e00000"/>
<polygon points="743.5,133.4 737.5,137.9 743.5,142.4" fill="#e00000"/>
<path d="M699.5,126.9 l-4.5,6 h3 v10 h-3 l4.5,6 l4.5,-6 h-3 v-10 h3 z" fill="#eca0ac"/>
<rect x="800.0" y="100.0" width="39.5" height="79.5" fill="#a8a8a8" stroke="#000" stroke-width="1"/>
<rect x="801.0" y="101.0" width="37.5" height="77.5" fill="none" stroke="#f4f4f4" stroke-width="1"/>
<rect x="807.0" y="102.0" width="25" height="75" fill="url(#cylV)"/>
<rect x="807.0" y="102.0" width="25" height="75" fill="url(#cylH)"/>
<path d="M807.0,101.5 h3 M830.0,101.5 h-3 M807.0,105.5 h3 M830.0,105.5 h-3 M807.0,109.5 h3 M830.0,109.5 h-3 M807.0,113.5 h3 M830.0,113.5 h-3 M807.0,117.5 h5 M830.0,117.5 h-5 M807.0,121.5 h3 M830.0,121.5 h-3 M807.0,125.5 h3 M830.0,125.5 h-3 M807.0,129.5 h3 M830.0,129.5 h-3 M807.0,133.5 h3 M830.0,133.5 h-3 M807.0,137.5 h5 M830.0,137.5 h-5 M807.0,141.5 h3 M830.0,141.5 h-3 M807.0,145.5 h3 M830.0,145.5 h-3 M807.0,149.5 h3 M830.0,149.5 h-3 M807.0,153.5 h3 M830.0,153.5 h-3 M807.0,157.5 h5 M830.0,157.5 h-5 M807.0,161.5 h3 M830.0,161.5 h-3 M807.0,165.5 h3 M830.0,165.5 h-3 M807.0,169.5 h3 M830.0,169.5 h-3 M807.0,173.5 h3 M830.0,173.5 h-3" stroke="#3a3a3a" stroke-width="0.9"/>
<text x="820.0" y="121.7" font-size="10" fill="#1a1a1a" text-anchor="middle" font-weight="normal" textLength="14.700000000000001" lengthAdjust="spacingAndGlyphs" >110</text>
<text x="820.0" y="141.5" font-size="10" fill="#1a1a1a" text-anchor="middle" font-weight="normal" textLength="14.700000000000001" lengthAdjust="spacingAndGlyphs" >120</text>
<text x="820.0" y="161.3" font-size="10" fill="#1a1a1a" text-anchor="middle" font-weight="normal" textLength="14.700000000000001" lengthAdjust="spacingAndGlyphs" >130</text>
<polygon points="801.0,133.4 807.0,137.9 801.0,142.4" fill="#e00000"/>
<polygon points="838.0,133.4 832.0,137.9 838.0,142.4" fill="#e00000"/>
<path d="M794.0,126.9 l-4.5,6 h3 v10 h-3 l4.5,6 l4.5,-6 h-3 v-10 h3 z" fill="#f0f020"/>
<rect x="894.0" y="100.0" width="39.5" height="79.5" fill="#a8a8a8" stroke="#000" stroke-width="1"/>
<rect x="895.0" y="101.0" width="37.5" height="77.5" fill="none" stroke="#f4f4f4" stroke-width="1"/>
<rect x="901.0" y="102.0" width="25" height="75" fill="url(#cylV)"/>
<rect x="901.0" y="102.0" width="25" height="75" fill="url(#cylH)"/>
<path d="M901.0,101.5 h3 M924.0,101.5 h-3 M901.0,105.5 h3 M924.0,105.5 h-3 M901.0,109.5 h3 M924.0,109.5 h-3 M901.0,113.5 h3 M924.0,113.5 h-3 M901.0,117.5 h5 M924.0,117.5 h-5 M901.0,121.5 h3 M924.0,121.5 h-3 M901.0,125.5 h3 M924.0,125.5 h-3 M901.0,129.5 h3 M924.0,129.5 h-3 M901.0,133.5 h3 M924.0,133.5 h-3 M901.0,137.5 h5 M924.0,137.5 h-5 M901.0,141.5 h3 M924.0,141.5 h-3 M901.0,145.5 h3 M924.0,145.5 h-3 M901.0,149.5 h3 M924.0,149.5 h-3 M901.0,153.5 h3 M924.0,153.5 h-3 M901.0,157.5 h5 M924.0,157.5 h-5 M901.0,161.5 h3 M924.0,161.5 h-3 M901.0,165.5 h3 M924.0,165.5 h-3 M901.0,169.5 h3 M924.0,169.5 h-3 M901.0,173.5 h3 M924.0,173.5 h-3" stroke="#3a3a3a" stroke-width="0.9"/>
<text x="914.0" y="121.7" font-size="10" fill="#1a1a1a" text-anchor="middle" font-weight="normal" textLength="14.700000000000001" lengthAdjust="spacingAndGlyphs" >-50</text>
<text x="914.0" y="141.5" font-size="10" fill="#1a1a1a" text-anchor="middle" font-weight="normal" textLength="14.700000000000001" lengthAdjust="spacingAndGlyphs" >-40</text>
<text x="914.0" y="161.3" font-size="10" fill="#1a1a1a" text-anchor="middle" font-weight="normal" textLength="14.700000000000001" lengthAdjust="spacingAndGlyphs" >-30</text>
<polygon points="895.0,133.4 901.0,137.9 895.0,142.4" fill="#e00000"/>
<polygon points="932.0,133.4 926.0,137.9 932.0,142.4" fill="#e00000"/>
<path d="M888.0,126.9 l-4.5,6 h3 v10 h-3 l4.5,6 l4.5,-6 h-3 v-10 h3 z" fill="#d81e86"/>
<rect x="800.0" y="312.0" width="39.5" height="79.5" fill="#a8a8a8" stroke="#000" stroke-width="1"/>
<rect x="801.0" y="313.0" width="37.5" height="77.5" fill="none" stroke="#f4f4f4" stroke-width="1"/>
<rect x="807.0" y="314.0" width="25" height="75" fill="url(#cylV)"/>
<rect x="807.0" y="314.0" width="25" height="75" fill="url(#cylH)"/>
<path d="M807.0,313.5 h3 M830.0,313.5 h-3 M807.0,317.5 h3 M830.0,317.5 h-3 M807.0,321.5 h3 M830.0,321.5 h-3 M807.0,325.5 h3 M830.0,325.5 h-3 M807.0,329.5 h5 M830.0,329.5 h-5 M807.0,333.5 h3 M830.0,333.5 h-3 M807.0,337.5 h3 M830.0,337.5 h-3 M807.0,341.5 h3 M830.0,341.5 h-3 M807.0,345.5 h3 M830.0,345.5 h-3 M807.0,349.5 h5 M830.0,349.5 h-5 M807.0,353.5 h3 M830.0,353.5 h-3 M807.0,357.5 h3 M830.0,357.5 h-3 M807.0,361.5 h3 M830.0,361.5 h-3 M807.0,365.5 h3 M830.0,365.5 h-3 M807.0,369.5 h5 M830.0,369.5 h-5 M807.0,373.5 h3 M830.0,373.5 h-3 M807.0,377.5 h3 M830.0,377.5 h-3 M807.0,381.5 h3 M830.0,381.5 h-3 M807.0,385.5 h3 M830.0,385.5 h-3" stroke="#3a3a3a" stroke-width="0.9"/>
<text x="820.0" y="333.7" font-size="10" fill="#1a1a1a" text-anchor="middle" font-weight="normal" textLength="9.8" lengthAdjust="spacingAndGlyphs" >30</text>
<text x="820.0" y="353.5" font-size="10" fill="#1a1a1a" text-anchor="middle" font-weight="normal" textLength="9.8" lengthAdjust="spacingAndGlyphs" >40</text>
<text x="820.0" y="373.3" font-size="10" fill="#1a1a1a" text-anchor="middle" font-weight="normal" textLength="9.8" lengthAdjust="spacingAndGlyphs" >50</text>
<polygon points="801.0,345.4 807.0,349.9 801.0,354.4" fill="#e00000"/>
<polygon points="838.0,345.4 832.0,349.9 838.0,354.4" fill="#e00000"/>
<path d="M794.0,338.9 l-4.5,6 h3 v10 h-3 l4.5,6 l4.5,-6 h-3 v-10 h3 z" fill="#2e94e0"/>
<rect x="894.0" y="312.0" width="39.5" height="79.5" fill="#a8a8a8" stroke="#000" stroke-width="1"/>
<rect x="895.0" y="313.0" width="37.5" height="77.5" fill="none" stroke="#f4f4f4" stroke-width="1"/>
<rect x="901.0" y="314.0" width="25" height="75" fill="url(#cylV)"/>
<rect x="901.0" y="314.0" width="25" height="75" fill="url(#cylH)"/>
<path d="M901.0,313.5 h3 M924.0,313.5 h-3 M901.0,317.5 h3 M924.0,317.5 h-3 M901.0,321.5 h3 M924.0,321.5 h-3 M901.0,325.5 h3 M924.0,325.5 h-3 M901.0,329.5 h5 M924.0,329.5 h-5 M901.0,333.5 h3 M924.0,333.5 h-3 M901.0,337.5 h3 M924.0,337.5 h-3 M901.0,341.5 h3 M924.0,341.5 h-3 M901.0,345.5 h3 M924.0,345.5 h-3 M901.0,349.5 h5 M924.0,349.5 h-5 M901.0,353.5 h3 M924.0,353.5 h-3 M901.0,357.5 h3 M924.0,357.5 h-3 M901.0,361.5 h3 M924.0,361.5 h-3 M901.0,365.5 h3 M924.0,365.5 h-3 M901.0,369.5 h5 M924.0,369.5 h-5 M901.0,373.5 h3 M924.0,373.5 h-3 M901.0,377.5 h3 M924.0,377.5 h-3 M901.0,381.5 h3 M924.0,381.5 h-3 M901.0,385.5 h3 M924.0,385.5 h-3" stroke="#3a3a3a" stroke-width="0.9"/>
<text x="914.0" y="333.7" font-size="10" fill="#1a1a1a" text-anchor="middle" font-weight="normal" textLength="19.6" lengthAdjust="spacingAndGlyphs" >-130</text>
<text x="914.0" y="353.5" font-size="10" fill="#1a1a1a" text-anchor="middle" font-weight="normal" textLength="19.6" lengthAdjust="spacingAndGlyphs" >-120</text>
<text x="914.0" y="373.3" font-size="10" fill="#1a1a1a" text-anchor="middle" font-weight="normal" textLength="19.6" lengthAdjust="spacingAndGlyphs" >-110</text>
<polygon points="895.0,345.4 901.0,349.9 895.0,354.4" fill="#e00000"/>
<polygon points="932.0,345.4 926.0,349.9 932.0,354.4" fill="#e00000"/>
<path d="M888.0,338.9 l-4.5,6 h3 v10 h-3 l4.5,6 l4.5,-6 h-3 v-10 h3 z" fill="#1e9a4a"/>
<text x="725.4" y="97" font-size="9.5" fill="#2e2e2e" text-anchor="middle" font-weight="normal" textLength="21.4" lengthAdjust="spacingAndGlyphs" stroke="#2e2e2e" stroke-width="0.22">Level</text>
<text x="818.5" y="97" font-size="9.5" fill="#2e2e2e" text-anchor="middle" font-weight="normal" textLength="32.2" lengthAdjust="spacingAndGlyphs" stroke="#2e2e2e" stroke-width="0.22">Position</text>
<text x="818.5" y="309" font-size="9.5" fill="#2e2e2e" text-anchor="middle" font-weight="normal" textLength="32.2" lengthAdjust="spacingAndGlyphs" stroke="#2e2e2e" stroke-width="0.22">Position</text>
<text x="912.5" y="97" font-size="9.5" fill="#2e2e2e" text-anchor="middle" font-weight="normal" textLength="32.2" lengthAdjust="spacingAndGlyphs" stroke="#2e2e2e" stroke-width="0.22">Position</text>
<text x="912.5" y="309" font-size="9.5" fill="#2e2e2e" text-anchor="middle" font-weight="normal" textLength="32.2" lengthAdjust="spacingAndGlyphs" stroke="#2e2e2e" stroke-width="0.22">Position</text>
<text x="863" y="103.1" font-size="9.5" fill="#2e2e2e" text-anchor="end" font-weight="normal" textLength="12.4" lengthAdjust="spacingAndGlyphs" stroke="#2e2e2e" stroke-width="0.22">AC</text>
<text x="863" y="116.8" font-size="9.5" fill="#2e2e2e" text-anchor="end" font-weight="normal" textLength="13" lengthAdjust="spacingAndGlyphs" stroke="#2e2e2e" stroke-width="0.22">DC</text>
<text x="863" y="130.5" font-size="9.5" fill="#2e2e2e" text-anchor="end" font-weight="normal" textLength="19" lengthAdjust="spacingAndGlyphs" stroke="#2e2e2e" stroke-width="0.22">GND</text>
<text x="863" y="144.2" font-size="9.5" fill="#2e2e2e" text-anchor="end" font-weight="normal" textLength="18" lengthAdjust="spacingAndGlyphs" stroke="#2e2e2e" stroke-width="0.22">OFF</text>
<rect x="865.7" y="90.0" width="13" height="62.5" fill="#a8a8a8" stroke="#000" stroke-width="1"/>
<rect x="866.7" y="91.0" width="11" height="60.5" fill="none" stroke="#f0f0f0" stroke-width="1"/>
<rect x="870.8000000000001" y="93.5" width="2.6" height="55.5" fill="#000"/>
<rect x="867.7" y="92.0" width="9" height="13.5" fill="#d4d4d4" stroke="#505050" stroke-width="1"/>
<line x1="868.7" y1="94.5" x2="875.7" y2="94.5" stroke="#555" stroke-width="0.8"/>
<line x1="868.7" y1="96.9" x2="875.7" y2="96.9" stroke="#555" stroke-width="0.8"/>
<line x1="868.7" y1="99.3" x2="875.7" y2="99.3" stroke="#555" stroke-width="0.8"/>
<line x1="868.7" y1="101.7" x2="875.7" y2="101.7" stroke="#555" stroke-width="0.8"/>
<line x1="868.7" y1="104.1" x2="875.7" y2="104.1" stroke="#555" stroke-width="0.8"/>
<rect x="866.0" y="154" width="14.5" height="14.5" fill="#101010"/>
<rect x="866.0" y="154" width="13.5" height="13.5" fill="#f0f0f0"/>
<rect x="867.0" y="155" width="12.5" height="12.5" fill="url(#btn)"/>
<text x="863.3" y="163.9" font-size="9.5" fill="#2e2e2e" text-anchor="end" font-weight="normal" textLength="23" lengthAdjust="spacingAndGlyphs" stroke="#2e2e2e" stroke-width="0.22">Invert</text>
<rect x="866.0" y="170" width="14.5" height="14.5" fill="#101010"/>
<rect x="866.0" y="170" width="13.5" height="13.5" fill="#f0f0f0"/>
<rect x="867.0" y="171" width="12.5" height="12.5" fill="url(#btn)"/>
<text x="863" y="179.4" font-size="9.5" fill="#2e2e2e" text-anchor="end" font-weight="normal" textLength="17" lengthAdjust="spacingAndGlyphs" stroke="#2e2e2e" stroke-width="0.22">A+B</text>
<text x="957" y="103.1" font-size="9.5" fill="#2e2e2e" text-anchor="end" font-weight="normal" textLength="12.4" lengthAdjust="spacingAndGlyphs" stroke="#2e2e2e" stroke-width="0.22">AC</text>
<text x="957" y="116.8" font-size="9.5" fill="#2e2e2e" text-anchor="end" font-weight="normal" textLength="13" lengthAdjust="spacingAndGlyphs" stroke="#2e2e2e" stroke-width="0.22">DC</text>
<text x="957" y="130.5" font-size="9.5" fill="#2e2e2e" text-anchor="end" font-weight="normal" textLength="19" lengthAdjust="spacingAndGlyphs" stroke="#2e2e2e" stroke-width="0.22">GND</text>
<text x="957" y="144.2" font-size="9.5" fill="#2e2e2e" text-anchor="end" font-weight="normal" textLength="18" lengthAdjust="spacingAndGlyphs" stroke="#2e2e2e" stroke-width="0.22">OFF</text>
<rect x="959.7" y="90.0" width="13" height="62.5" fill="#a8a8a8" stroke="#000" stroke-width="1"/>
<rect x="960.7" y="91.0" width="11" height="60.5" fill="none" stroke="#f0f0f0" stroke-width="1"/>
<rect x="964.8000000000001" y="93.5" width="2.6" height="55.5" fill="#000"/>
<rect x="961.7" y="92.0" width="9" height="13.5" fill="#d4d4d4" stroke="#505050" stroke-width="1"/>
<line x1="962.7" y1="94.5" x2="969.7" y2="94.5" stroke="#555" stroke-width="0.8"/>
<line x1="962.7" y1="96.9" x2="969.7" y2="96.9" stroke="#555" stroke-width="0.8"/>
<line x1="962.7" y1="99.3" x2="969.7" y2="99.3" stroke="#555" stroke-width="0.8"/>
<line x1="962.7" y1="101.7" x2="969.7" y2="101.7" stroke="#555" stroke-width="0.8"/>
<line x1="962.7" y1="104.1" x2="969.7" y2="104.1" stroke="#555" stroke-width="0.8"/>
<rect x="960.0" y="154" width="14.5" height="14.5" fill="#101010"/>
<rect x="960.0" y="154" width="13.5" height="13.5" fill="#f0f0f0"/>
<rect x="961.0" y="155" width="12.5" height="12.5" fill="url(#btn)"/>
<text x="957.3" y="163.9" font-size="9.5" fill="#2e2e2e" text-anchor="end" font-weight="normal" textLength="23" lengthAdjust="spacingAndGlyphs" stroke="#2e2e2e" stroke-width="0.22">Invert</text>
<rect x="960.0" y="170" width="14.5" height="14.5" fill="#101010"/>
<rect x="960.0" y="170" width="13.5" height="13.5" fill="#f0f0f0"/>
<rect x="961.0" y="171" width="12.5" height="12.5" fill="url(#btn)"/>
<text x="957" y="179.4" font-size="9.5" fill="#2e2e2e" text-anchor="end" font-weight="normal" textLength="17" lengthAdjust="spacingAndGlyphs" stroke="#2e2e2e" stroke-width="0.22">C+D</text>
<text x="863" y="315.1" font-size="9.5" fill="#2e2e2e" text-anchor="end" font-weight="normal" textLength="12.4" lengthAdjust="spacingAndGlyphs" stroke="#2e2e2e" stroke-width="0.22">AC</text>
<text x="863" y="328.8" font-size="9.5" fill="#2e2e2e" text-anchor="end" font-weight="normal" textLength="13" lengthAdjust="spacingAndGlyphs" stroke="#2e2e2e" stroke-width="0.22">DC</text>
<text x="863" y="342.5" font-size="9.5" fill="#2e2e2e" text-anchor="end" font-weight="normal" textLength="19" lengthAdjust="spacingAndGlyphs" stroke="#2e2e2e" stroke-width="0.22">GND</text>
<text x="863" y="356.20000000000005" font-size="9.5" fill="#2e2e2e" text-anchor="end" font-weight="normal" textLength="18" lengthAdjust="spacingAndGlyphs" stroke="#2e2e2e" stroke-width="0.22">OFF</text>
<rect x="865.7" y="302.0" width="13" height="62.5" fill="#a8a8a8" stroke="#000" stroke-width="1"/>
<rect x="866.7" y="303.0" width="11" height="60.5" fill="none" stroke="#f0f0f0" stroke-width="1"/>
<rect x="870.8000000000001" y="305.5" width="2.6" height="55.5" fill="#000"/>
<rect x="867.7" y="304.0" width="9" height="13.5" fill="#d4d4d4" stroke="#505050" stroke-width="1"/>
<line x1="868.7" y1="306.5" x2="875.7" y2="306.5" stroke="#555" stroke-width="0.8"/>
<line x1="868.7" y1="308.9" x2="875.7" y2="308.9" stroke="#555" stroke-width="0.8"/>
<line x1="868.7" y1="311.3" x2="875.7" y2="311.3" stroke="#555" stroke-width="0.8"/>
<line x1="868.7" y1="313.7" x2="875.7" y2="313.7" stroke="#555" stroke-width="0.8"/>
<line x1="868.7" y1="316.1" x2="875.7" y2="316.1" stroke="#555" stroke-width="0.8"/>
<rect x="866.0" y="366" width="14.5" height="14.5" fill="#101010"/>
<rect x="866.0" y="366" width="13.5" height="13.5" fill="#f0f0f0"/>
<rect x="867.0" y="367" width="12.5" height="12.5" fill="url(#btn)"/>
<text x="863.3" y="375.9" font-size="9.5" fill="#2e2e2e" text-anchor="end" font-weight="normal" textLength="23" lengthAdjust="spacingAndGlyphs" stroke="#2e2e2e" stroke-width="0.22">Invert</text>
<text x="957" y="315.1" font-size="9.5" fill="#2e2e2e" text-anchor="end" font-weight="normal" textLength="12.4" lengthAdjust="spacingAndGlyphs" stroke="#2e2e2e" stroke-width="0.22">AC</text>
<text x="957" y="328.8" font-size="9.5" fill="#2e2e2e" text-anchor="end" font-weight="normal" textLength="13" lengthAdjust="spacingAndGlyphs" stroke="#2e2e2e" stroke-width="0.22">DC</text>
<text x="957" y="342.5" font-size="9.5" fill="#2e2e2e" text-anchor="end" font-weight="normal" textLength="19" lengthAdjust="spacingAndGlyphs" stroke="#2e2e2e" stroke-width="0.22">GND</text>
<text x="957" y="356.20000000000005" font-size="9.5" fill="#2e2e2e" text-anchor="end" font-weight="normal" textLength="18" lengthAdjust="spacingAndGlyphs" stroke="#2e2e2e" stroke-width="0.22">OFF</text>
<rect x="959.7" y="302.0" width="13" height="62.5" fill="#a8a8a8" stroke="#000" stroke-width="1"/>
<rect x="960.7" y="303.0" width="11" height="60.5" fill="none" stroke="#f0f0f0" stroke-width="1"/>
<rect x="964.8000000000001" y="305.5" width="2.6" height="55.5" fill="#000"/>
<rect x="961.7" y="304.0" width="9" height="13.5" fill="#d4d4d4" stroke="#505050" stroke-width="1"/>
<line x1="962.7" y1="306.5" x2="969.7" y2="306.5" stroke="#555" stroke-width="0.8"/>
<line x1="962.7" y1="308.9" x2="969.7" y2="308.9" stroke="#555" stroke-width="0.8"/>
<line x1="962.7" y1="311.3" x2="969.7" y2="311.3" stroke="#555" stroke-width="0.8"/>
<line x1="962.7" y1="313.7" x2="969.7" y2="313.7" stroke="#555" stroke-width="0.8"/>
<line x1="962.7" y1="316.1" x2="969.7" y2="316.1" stroke="#555" stroke-width="0.8"/>
<rect x="960.0" y="366" width="14.5" height="14.5" fill="#101010"/>
<rect x="960.0" y="366" width="13.5" height="13.5" fill="#f0f0f0"/>
<rect x="961.0" y="367" width="12.5" height="12.5" fill="url(#btn)"/>
<text x="957.3" y="375.9" font-size="9.5" fill="#2e2e2e" text-anchor="end" font-weight="normal" textLength="23" lengthAdjust="spacingAndGlyphs" stroke="#2e2e2e" stroke-width="0.22">Invert</text>
<text x="769" y="103" font-size="9.5" fill="#2e2e2e" text-anchor="end" font-weight="normal" textLength="12.4" lengthAdjust="spacingAndGlyphs" stroke="#2e2e2e" stroke-width="0.22">AC</text>
<text x="769" y="117" font-size="9.5" fill="#2e2e2e" text-anchor="end" font-weight="normal" textLength="13" lengthAdjust="spacingAndGlyphs" stroke="#2e2e2e" stroke-width="0.22">DC</text>
<rect x="771.5" y="90.5" width="13" height="32" fill="#a8a8a8" stroke="#000" stroke-width="1"/>
<rect x="772.5" y="91.5" width="11" height="30" fill="none" stroke="#f0f0f0" stroke-width="1"/>
<rect x="776.6" y="94" width="2.6" height="25" fill="#000"/>
<rect x="773.5" y="106.5" width="9" height="13.5" fill="#d4d4d4" stroke="#505050" stroke-width="1"/>
<line x1="774.5" y1="109.0" x2="781.5" y2="109.0" stroke="#555" stroke-width="0.8"/>
<line x1="774.5" y1="111.4" x2="781.5" y2="111.4" stroke="#555" stroke-width="0.8"/>
<line x1="774.5" y1="113.8" x2="781.5" y2="113.8" stroke="#555" stroke-width="0.8"/>
<line x1="774.5" y1="116.2" x2="781.5" y2="116.2" stroke="#555" stroke-width="0.8"/>
<line x1="774.5" y1="118.6" x2="781.5" y2="118.6" stroke="#555" stroke-width="0.8"/>
<rect x="771.5" y="134.5" width="13" height="32" fill="#a8a8a8" stroke="#000" stroke-width="1"/>
<rect x="772.5" y="135.5" width="11" height="30" fill="none" stroke="#f0f0f0" stroke-width="1"/>
<rect x="776.6" y="138" width="2.6" height="25" fill="#000"/>
<rect x="773.5" y="136.5" width="9" height="13.5" fill="#d4d4d4" stroke="#505050" stroke-width="1"/>
<line x1="774.5" y1="139.0" x2="781.5" y2="139.0" stroke="#555" stroke-width="0.8"/>
<line x1="774.5" y1="141.4" x2="781.5" y2="141.4" stroke="#555" stroke-width="0.8"/>
<line x1="774.5" y1="143.8" x2="781.5" y2="143.8" stroke="#555" stroke-width="0.8"/>
<line x1="774.5" y1="146.2" x2="781.5" y2="146.2" stroke="#555" stroke-width="0.8"/>
<line x1="774.5" y1="148.6" x2="781.5" y2="148.6" stroke="#555" stroke-width="0.8"/>
<path d="M767.5,139 h-3 v10 h-3 M761.5,153 h3 v8 h3" fill="none" stroke="#222" stroke-width="1.2"/>
<rect x="771" y="180" width="14.5" height="14.5" fill="#101010"/>
<rect x="771" y="180" width="13.5" height="13.5" fill="#f0f0f0"/>
<rect x="772" y="181" width="12.5" height="12.5" fill="url(#btnP)"/>
<text x="768.5" y="190.5" font-size="9.5" fill="#2e2e2e" text-anchor="end" font-weight="normal" textLength="17.9" lengthAdjust="spacingAndGlyphs" stroke="#2e2e2e" stroke-width="0.22">Auto</text>
<rect x="771" y="196" width="14.5" height="14.5" fill="#101010"/>
<rect x="771" y="196" width="13.5" height="13.5" fill="#f0f0f0"/>
<rect x="772" y="197" width="12.5" height="12.5" fill="url(#btn)"/>
<text x="768.5" y="206.0" font-size="9.5" fill="#2e2e2e" text-anchor="end" font-weight="normal" textLength="39" lengthAdjust="spacingAndGlyphs" stroke="#2e2e2e" stroke-width="0.22">One-Shot</text>
<rect x="771" y="212" width="14.5" height="14.5" fill="#101010"/>
<rect x="771" y="212" width="13.5" height="13.5" fill="#f0f0f0"/>
<rect x="772" y="213" width="12.5" height="12.5" fill="url(#btn)"/>
<text x="768.5" y="221.5" font-size="9.5" fill="#2e2e2e" text-anchor="end" font-weight="normal" textLength="35" lengthAdjust="spacingAndGlyphs" stroke="#2e2e2e" stroke-width="0.22">Cursors</text>
<text x="740.6" y="242" font-size="9.5" fill="#2e2e2e" text-anchor="middle" font-weight="normal" textLength="27" lengthAdjust="spacingAndGlyphs" stroke="#2e2e2e" stroke-width="0.22">Source</text>
<text x="720.4" y="253" font-size="9.5" fill="#f0f028" text-anchor="middle" font-weight="bold" >A</text>
<text x="735.3" y="253" font-size="9.5" fill="#3ea0e8" text-anchor="middle" font-weight="bold" >B</text>
<text x="749.8" y="253" font-size="9.5" fill="#d82e90" text-anchor="middle" font-weight="bold" >C</text>
<text x="764.3" y="253" font-size="9.5" fill="#22a050" text-anchor="middle" font-weight="bold" >D</text>
<rect x="709.5" y="255.5" width="63.5" height="13" fill="#a8a8a8" stroke="#000" stroke-width="1"/>
<rect x="710.5" y="256.5" width="61.5" height="11" fill="none" stroke="#f0f0f0" stroke-width="1"/>
<rect x="713" y="260.7" width="56.5" height="2.6" fill="#000"/>
<rect x="711.5" y="257.5" width="13.5" height="9" fill="#d4d4d4" stroke="#505050" stroke-width="1"/>
<line x1="714.0" y1="258.5" x2="714.0" y2="265.5" stroke="#555" stroke-width="0.8"/>
<line x1="716.4" y1="258.5" x2="716.4" y2="265.5" stroke="#555" stroke-width="0.8"/>
<line x1="718.8" y1="258.5" x2="718.8" y2="265.5" stroke="#555" stroke-width="0.8"/>
<line x1="721.2" y1="258.5" x2="721.2" y2="265.5" stroke="#555" stroke-width="0.8"/>
<line x1="723.6" y1="258.5" x2="723.6" y2="265.5" stroke="#555" stroke-width="0.8"/>
<text x="740" y="312" font-size="9.5" fill="#2e2e2e" text-anchor="middle" font-weight="normal" textLength="27" lengthAdjust="spacingAndGlyphs" stroke="#2e2e2e" stroke-width="0.22">Source</text>
<path d="M706,322 L715,316 V322" fill="none" stroke="#e8842e" stroke-width="1.2"/>
<text x="726" y="321" font-size="9.5" fill="#f0f028" text-anchor="middle" font-weight="bold" >A</text>
<text x="740.8" y="321" font-size="9.5" fill="#3ea0e8" text-anchor="middle" font-weight="bold" >B</text>
<text x="755.9" y="321" font-size="9.5" fill="#d82e90" text-anchor="middle" font-weight="bold" >C</text>
<text x="770.5" y="321" font-size="9.5" fill="#22a050" text-anchor="middle" font-weight="bold" >D</text>
<rect x="702.5" y="324.5" width="78" height="13" fill="#a8a8a8" stroke="#000" stroke-width="1"/>
<rect x="703.5" y="325.5" width="76" height="11" fill="none" stroke="#f0f0f0" stroke-width="1"/>
<rect x="706" y="329.7" width="71" height="2.6" fill="#000"/>
<rect x="704.5" y="326.5" width="13.5" height="9" fill="#d4d4d4" stroke="#505050" stroke-width="1"/>
<line x1="707.0" y1="327.5" x2="707.0" y2="334.5" stroke="#555" stroke-width="0.8"/>
<line x1="709.4" y1="327.5" x2="709.4" y2="334.5" stroke="#555" stroke-width="0.8"/>
<line x1="711.8" y1="327.5" x2="711.8" y2="334.5" stroke="#555" stroke-width="0.8"/>
<line x1="714.2" y1="327.5" x2="714.2" y2="334.5" stroke="#555" stroke-width="0.8"/>
<line x1="716.6" y1="327.5" x2="716.6" y2="334.5" stroke="#555" stroke-width="0.8"/>
<text x="740.2" y="350" font-size="9.5" fill="#2e2e2e" text-anchor="middle" font-weight="normal" textLength="32.2" lengthAdjust="spacingAndGlyphs" stroke="#2e2e2e" stroke-width="0.22">Position</text>
<rect x="702.5" y="353.5" width="79" height="38" fill="#a8a8a8" stroke="#000" stroke-width="1"/>
<rect x="703.5" y="354.5" width="77" height="36" fill="none" stroke="#f0f0f0" stroke-width="1"/>
<rect x="704" y="360" width="75.5" height="24.5" fill="url(#cylH2)"/>
<rect x="704" y="360" width="75.5" height="24.5" fill="url(#cylV2)"/>
<rect x="704" y="384.5" width="75.5" height="1.2" fill="#000" />
<path d="M705.5,360 v3 M705.5,384.5 v-3 M709.5,360 v3 M709.5,384.5 v-3 M713.5,360 v3 M713.5,384.5 v-3 M717.5,360 v3 M717.5,384.5 v-3 M721.5,360 v5 M721.5,384.5 v-5 M725.5,360 v3 M725.5,384.5 v-3 M729.5,360 v3 M729.5,384.5 v-3 M733.5,360 v3 M733.5,384.5 v-3 M737.5,360 v3 M737.5,384.5 v-3 M741.5,360 v5 M741.5,384.5 v-5 M745.5,360 v3 M745.5,384.5 v-3 M749.5,360 v3 M749.5,384.5 v-3 M753.5,360 v3 M753.5,384.5 v-3 M757.5,360 v3 M757.5,384.5 v-3 M761.5,360 v5 M761.5,384.5 v-5 M765.5,360 v3 M765.5,384.5 v-3 M769.5,360 v3 M769.5,384.5 v-3 M773.5,360 v3 M773.5,384.5 v-3 M777.5,360 v3 M777.5,384.5 v-3" stroke="#3a3a3a" stroke-width="0.8"/>
<text x="720.3" y="375.3" font-size="10.5" fill="#111" text-anchor="middle" font-weight="normal" textLength="14.5" lengthAdjust="spacingAndGlyphs" >210</text>
<text x="740.6" y="375.3" font-size="10.5" fill="#111" text-anchor="middle" font-weight="normal" textLength="14.5" lengthAdjust="spacingAndGlyphs" >200</text>
<text x="761" y="375.3" font-size="10.5" fill="#111" text-anchor="middle" font-weight="normal" textLength="14.5" lengthAdjust="spacingAndGlyphs" >190</text>
<polygon points="736,354 746,354 741,359.5" fill="#e00000"/>
<polygon points="736,390 746,390 741,385" fill="#e00000"/>
<path d="M791.2,269.3 V224.8 A44,44 0 0 1 879.2,224.8 V269.3 Z" fill="#fdfdfd" stroke="#7a7a7a" stroke-width="1"/>
<line x1="850.86" y1="201.59" x2="860.92" y2="186.66" stroke="#a8a8a8" stroke-width="3.5"/>
<rect x="816.7" y="224.8" width="37.5" height="45.0" fill="#a8a8a8"/>
<line x1="816.7" y1="224.8" x2="816.7" y2="269.3" stroke="#7a7a7a" stroke-width="1"/>
<line x1="854.2" y1="224.8" x2="854.2" y2="269.3" stroke="#7a7a7a" stroke-width="1"/>
<path d="M814.69,245.31 L811.16,248.84 M808.41,235.90 L803.79,237.81 M806.20,224.80 L801.20,224.80 M808.41,213.70 L803.79,211.79 M814.69,204.29 L811.16,200.76 M824.10,198.01 L822.19,193.39 M835.20,195.80 L835.20,190.80 M846.30,198.01 L848.21,193.39 M855.71,204.29 L859.24,200.76 M861.99,213.70 L866.61,211.79 M864.20,224.80 L869.20,224.80 M861.99,235.90 L866.61,237.81 M855.71,245.31 L859.24,248.84" stroke="#333" stroke-width="1"/>
<text x="807.41" y="255.29" font-size="7.8" fill="#2e2e2e" text-anchor="middle" font-weight="normal" stroke="#2e2e2e" stroke-width="0.22">20</text>
<text x="798.89" y="242.54" font-size="7.8" fill="#2e2e2e" text-anchor="middle" font-weight="normal" stroke="#2e2e2e" stroke-width="0.22">10</text>
<text x="795.90" y="227.50" font-size="7.8" fill="#2e2e2e" text-anchor="middle" font-weight="normal" stroke="#2e2e2e" stroke-width="0.22">5</text>
<text x="798.89" y="212.46" font-size="7.8" fill="#2e2e2e" text-anchor="middle" font-weight="normal" stroke="#2e2e2e" stroke-width="0.22">2</text>
<text x="807.41" y="199.71" font-size="7.8" fill="#2e2e2e" text-anchor="middle" font-weight="normal" stroke="#2e2e2e" stroke-width="0.22">1</text>
<text x="820.16" y="191.19" font-size="7.8" fill="#2e2e2e" text-anchor="middle" font-weight="normal" stroke="#2e2e2e" stroke-width="0.22">0.5</text>
<text x="835.20" y="188.20" font-size="7.8" fill="#2e2e2e" text-anchor="middle" font-weight="normal" stroke="#2e2e2e" stroke-width="0.22">0.2</text>
<text x="850.24" y="191.19" font-size="7.8" fill="#2e2e2e" text-anchor="middle" font-weight="normal" stroke="#2e2e2e" stroke-width="0.22">0.1</text>
<text x="862.99" y="199.71" font-size="7.8" fill="#2e2e2e" text-anchor="middle" font-weight="normal" stroke="#2e2e2e" stroke-width="0.22">50</text>
<text x="871.51" y="212.46" font-size="7.8" fill="#2e2e2e" text-anchor="middle" font-weight="normal" stroke="#2e2e2e" stroke-width="0.22">20</text>
<text x="874.50" y="227.50" font-size="7.8" fill="#2e2e2e" text-anchor="middle" font-weight="normal" stroke="#2e2e2e" stroke-width="0.22">10</text>
<text x="871.51" y="242.54" font-size="7.8" fill="#2e2e2e" text-anchor="middle" font-weight="normal" stroke="#2e2e2e" stroke-width="0.22">5</text>
<text x="862.99" y="255.29" font-size="7.8" fill="#2e2e2e" text-anchor="middle" font-weight="normal" stroke="#2e2e2e" stroke-width="0.22">2</text>
<text x="803.4000000000001" y="264.8" font-size="9.5" fill="#2e2e2e" text-anchor="middle" font-weight="normal" stroke="#2e2e2e" stroke-width="0.22">V</text>
<text x="867.7" y="264.8" font-size="9.5" fill="#2e2e2e" text-anchor="middle" font-weight="normal" stroke="#2e2e2e" stroke-width="0.22">mV</text>
<circle cx="835.2" cy="224.8" r="29.6" fill="url(#knobO)"/>
<circle cx="835.2" cy="224.8" r="29.6" fill="url(#knobRing)"/>
<circle cx="835.2" cy="224.8" r="29.6" fill="url(#knobShade)"/>
<circle cx="836.0" cy="225.60000000000002" r="16.5" fill="#5a5a5a" opacity="0.8"/>
<circle cx="835.2" cy="224.8" r="14.8" fill="url(#knobI)"/>
<polygon points="-4.8,0 4.7,-5.6 4.7,5.6" fill="#f0f020" transform="translate(813.70,224.80) rotate(0)"/>
<polygon points="-3.2,0 3,-3.6 3,3.6" fill="#f0f020" transform="translate(842.50,232.60) rotate(-15)"/>
<rect x="818.2" y="255.8" width="35.5" height="13" fill="#fff"/>
<path d="M818.7,268.8 V256.3 H853.7" fill="none" stroke="#111" stroke-width="1.3"/>
<text x="820.7" y="264.8" font-size="9.5" fill="#3a2a8a" text-anchor="start" font-weight="normal" >5</text>
<path d="M885.2,269.5 V225 A44,44 0 0 1 973.2,225 V269.5 Z" fill="#fdfdfd" stroke="#7a7a7a" stroke-width="1"/>
<line x1="944.86" y1="201.79" x2="954.92" y2="186.86" stroke="#a8a8a8" stroke-width="3.5"/>
<rect x="910.7" y="225" width="37.5" height="45.0" fill="#a8a8a8"/>
<line x1="910.7" y1="225" x2="910.7" y2="269.5" stroke="#7a7a7a" stroke-width="1"/>
<line x1="948.2" y1="225" x2="948.2" y2="269.5" stroke="#7a7a7a" stroke-width="1"/>
<path d="M908.69,245.51 L905.16,249.04 M902.41,236.10 L897.79,238.01 M900.20,225.00 L895.20,225.00 M902.41,213.90 L897.79,211.99 M908.69,204.49 L905.16,200.96 M918.10,198.21 L916.19,193.59 M929.20,196.00 L929.20,191.00 M940.30,198.21 L942.21,193.59 M949.71,204.49 L953.24,200.96 M955.99,213.90 L960.61,211.99 M958.20,225.00 L963.20,225.00 M955.99,236.10 L960.61,238.01 M949.71,245.51 L953.24,249.04" stroke="#333" stroke-width="1"/>
<text x="901.41" y="255.49" font-size="7.8" fill="#2e2e2e" text-anchor="middle" font-weight="normal" stroke="#2e2e2e" stroke-width="0.22">20</text>
<text x="892.89" y="242.74" font-size="7.8" fill="#2e2e2e" text-anchor="middle" font-weight="normal" stroke="#2e2e2e" stroke-width="0.22">10</text>
<text x="889.90" y="227.70" font-size="7.8" fill="#2e2e2e" text-anchor="middle" font-weight="normal" stroke="#2e2e2e" stroke-width="0.22">5</text>
<text x="892.89" y="212.66" font-size="7.8" fill="#2e2e2e" text-anchor="middle" font-weight="normal" stroke="#2e2e2e" stroke-width="0.22">2</text>
<text x="901.41" y="199.91" font-size="7.8" fill="#2e2e2e" text-anchor="middle" font-weight="normal" stroke="#2e2e2e" stroke-width="0.22">1</text>
<text x="914.16" y="191.39" font-size="7.8" fill="#2e2e2e" text-anchor="middle" font-weight="normal" stroke="#2e2e2e" stroke-width="0.22">0.5</text>
<text x="929.20" y="188.40" font-size="7.8" fill="#2e2e2e" text-anchor="middle" font-weight="normal" stroke="#2e2e2e" stroke-width="0.22">0.2</text>
<text x="944.24" y="191.39" font-size="7.8" fill="#2e2e2e" text-anchor="middle" font-weight="normal" stroke="#2e2e2e" stroke-width="0.22">0.1</text>
<text x="956.99" y="199.91" font-size="7.8" fill="#2e2e2e" text-anchor="middle" font-weight="normal" stroke="#2e2e2e" stroke-width="0.22">50</text>
<text x="965.51" y="212.66" font-size="7.8" fill="#2e2e2e" text-anchor="middle" font-weight="normal" stroke="#2e2e2e" stroke-width="0.22">20</text>
<text x="968.50" y="227.70" font-size="7.8" fill="#2e2e2e" text-anchor="middle" font-weight="normal" stroke="#2e2e2e" stroke-width="0.22">10</text>
<text x="965.51" y="242.74" font-size="7.8" fill="#2e2e2e" text-anchor="middle" font-weight="normal" stroke="#2e2e2e" stroke-width="0.22">5</text>
<text x="956.99" y="255.49" font-size="7.8" fill="#2e2e2e" text-anchor="middle" font-weight="normal" stroke="#2e2e2e" stroke-width="0.22">2</text>
<text x="897.4000000000001" y="265" font-size="9.5" fill="#2e2e2e" text-anchor="middle" font-weight="normal" stroke="#2e2e2e" stroke-width="0.22">V</text>
<text x="961.7" y="265" font-size="9.5" fill="#2e2e2e" text-anchor="middle" font-weight="normal" stroke="#2e2e2e" stroke-width="0.22">mV</text>
<circle cx="929.2" cy="225" r="29.6" fill="url(#knobO)"/>
<circle cx="929.2" cy="225" r="29.6" fill="url(#knobRing)"/>
<circle cx="929.2" cy="225" r="29.6" fill="url(#knobShade)"/>
<circle cx="930.0" cy="225.8" r="16.5" fill="#5a5a5a" opacity="0.8"/>
<circle cx="929.2" cy="225" r="14.8" fill="url(#knobI)"/>
<polygon points="-4.8,0 4.7,-5.6 4.7,5.6" fill="#d81e86" transform="translate(907.70,225.00) rotate(0)"/>
<polygon points="-3.2,0 3,-3.6 3,3.6" fill="#d81e86" transform="translate(936.50,232.80) rotate(-15)"/>
<rect x="912.2" y="256" width="35.5" height="13" fill="#fff"/>
<path d="M912.7,269 V256.5 H947.7" fill="none" stroke="#111" stroke-width="1.3"/>
<text x="914.7" y="265" font-size="9.5" fill="#3a2a8a" text-anchor="start" font-weight="normal" >5</text>
<path d="M791,481.3 V436.8 A44,44 0 0 1 879,436.8 V481.3 Z" fill="#fdfdfd" stroke="#7a7a7a" stroke-width="1"/>
<line x1="850.66" y1="413.59" x2="860.72" y2="398.66" stroke="#a8a8a8" stroke-width="3.5"/>
<rect x="816.5" y="436.8" width="37.5" height="45.0" fill="#a8a8a8"/>
<line x1="816.5" y1="436.8" x2="816.5" y2="481.3" stroke="#7a7a7a" stroke-width="1"/>
<line x1="854" y1="436.8" x2="854" y2="481.3" stroke="#7a7a7a" stroke-width="1"/>
<path d="M814.49,457.31 L810.96,460.84 M808.21,447.90 L803.59,449.81 M806.00,436.80 L801.00,436.80 M808.21,425.70 L803.59,423.79 M814.49,416.29 L810.96,412.76 M823.90,410.01 L821.99,405.39 M835.00,407.80 L835.00,402.80 M846.10,410.01 L848.01,405.39 M855.51,416.29 L859.04,412.76 M861.79,425.70 L866.41,423.79 M864.00,436.80 L869.00,436.80 M861.79,447.90 L866.41,449.81 M855.51,457.31 L859.04,460.84" stroke="#333" stroke-width="1"/>
<text x="807.21" y="467.29" font-size="7.8" fill="#2e2e2e" text-anchor="middle" font-weight="normal" stroke="#2e2e2e" stroke-width="0.22">20</text>
<text x="798.69" y="454.54" font-size="7.8" fill="#2e2e2e" text-anchor="middle" font-weight="normal" stroke="#2e2e2e" stroke-width="0.22">10</text>
<text x="795.70" y="439.50" font-size="7.8" fill="#2e2e2e" text-anchor="middle" font-weight="normal" stroke="#2e2e2e" stroke-width="0.22">5</text>
<text x="798.69" y="424.46" font-size="7.8" fill="#2e2e2e" text-anchor="middle" font-weight="normal" stroke="#2e2e2e" stroke-width="0.22">2</text>
<text x="807.21" y="411.71" font-size="7.8" fill="#2e2e2e" text-anchor="middle" font-weight="normal" stroke="#2e2e2e" stroke-width="0.22">1</text>
<text x="819.96" y="403.19" font-size="7.8" fill="#2e2e2e" text-anchor="middle" font-weight="normal" stroke="#2e2e2e" stroke-width="0.22">0.5</text>
<text x="835.00" y="400.20" font-size="7.8" fill="#2e2e2e" text-anchor="middle" font-weight="normal" stroke="#2e2e2e" stroke-width="0.22">0.2</text>
<text x="850.04" y="403.19" font-size="7.8" fill="#2e2e2e" text-anchor="middle" font-weight="normal" stroke="#2e2e2e" stroke-width="0.22">0.1</text>
<text x="862.79" y="411.71" font-size="7.8" fill="#2e2e2e" text-anchor="middle" font-weight="normal" stroke="#2e2e2e" stroke-width="0.22">50</text>
<text x="871.31" y="424.46" font-size="7.8" fill="#2e2e2e" text-anchor="middle" font-weight="normal" stroke="#2e2e2e" stroke-width="0.22">20</text>
<text x="874.30" y="439.50" font-size="7.8" fill="#2e2e2e" text-anchor="middle" font-weight="normal" stroke="#2e2e2e" stroke-width="0.22">10</text>
<text x="871.31" y="454.54" font-size="7.8" fill="#2e2e2e" text-anchor="middle" font-weight="normal" stroke="#2e2e2e" stroke-width="0.22">5</text>
<text x="862.79" y="467.29" font-size="7.8" fill="#2e2e2e" text-anchor="middle" font-weight="normal" stroke="#2e2e2e" stroke-width="0.22">2</text>
<text x="803.2" y="476.8" font-size="9.5" fill="#2e2e2e" text-anchor="middle" font-weight="normal" stroke="#2e2e2e" stroke-width="0.22">V</text>
<text x="867.5" y="476.8" font-size="9.5" fill="#2e2e2e" text-anchor="middle" font-weight="normal" stroke="#2e2e2e" stroke-width="0.22">mV</text>
<circle cx="835" cy="436.8" r="29.6" fill="url(#knobO)"/>
<circle cx="835" cy="436.8" r="29.6" fill="url(#knobRing)"/>
<circle cx="835" cy="436.8" r="29.6" fill="url(#knobShade)"/>
<circle cx="835.8" cy="437.6" r="16.5" fill="#5a5a5a" opacity="0.8"/>
<circle cx="835" cy="436.8" r="14.8" fill="url(#knobI)"/>
<polygon points="-4.8,0 4.7,-5.6 4.7,5.6" fill="#2e94e0" transform="translate(813.50,436.80) rotate(0)"/>
<polygon points="-3.2,0 3,-3.6 3,3.6" fill="#2e94e0" transform="translate(842.30,444.60) rotate(-15)"/>
<rect x="818" y="467.8" width="35.5" height="13" fill="#fff"/>
<path d="M818.5,480.8 V468.3 H853.5" fill="none" stroke="#111" stroke-width="1.3"/>
<text x="820.5" y="476.8" font-size="9.5" fill="#3a2a8a" text-anchor="start" font-weight="normal" >5</text>
<path d="M885,481.3 V436.8 A44,44 0 0 1 973,436.8 V481.3 Z" fill="#fdfdfd" stroke="#7a7a7a" stroke-width="1"/>
<line x1="944.66" y1="413.59" x2="954.72" y2="398.66" stroke="#a8a8a8" stroke-width="3.5"/>
<rect x="910.5" y="436.8" width="37.5" height="45.0" fill="#a8a8a8"/>
<line x1="910.5" y1="436.8" x2="910.5" y2="481.3" stroke="#7a7a7a" stroke-width="1"/>
<line x1="948" y1="436.8" x2="948" y2="481.3" stroke="#7a7a7a" stroke-width="1"/>
<path d="M908.49,457.31 L904.96,460.84 M902.21,447.90 L897.59,449.81 M900.00,436.80 L895.00,436.80 M902.21,425.70 L897.59,423.79 M908.49,416.29 L904.96,412.76 M917.90,410.01 L915.99,405.39 M929.00,407.80 L929.00,402.80 M940.10,410.01 L942.01,405.39 M949.51,416.29 L953.04,412.76 M955.79,425.70 L960.41,423.79 M958.00,436.80 L963.00,436.80 M955.79,447.90 L960.41,449.81 M949.51,457.31 L953.04,460.84" stroke="#333" stroke-width="1"/>
<text x="901.21" y="467.29" font-size="7.8" fill="#2e2e2e" text-anchor="middle" font-weight="normal" stroke="#2e2e2e" stroke-width="0.22">20</text>
<text x="892.69" y="454.54" font-size="7.8" fill="#2e2e2e" text-anchor="middle" font-weight="normal" stroke="#2e2e2e" stroke-width="0.22">10</text>
<text x="889.70" y="439.50" font-size="7.8" fill="#2e2e2e" text-anchor="middle" font-weight="normal" stroke="#2e2e2e" stroke-width="0.22">5</text>
<text x="892.69" y="424.46" font-size="7.8" fill="#2e2e2e" text-anchor="middle" font-weight="normal" stroke="#2e2e2e" stroke-width="0.22">2</text>
<text x="901.21" y="411.71" font-size="7.8" fill="#2e2e2e" text-anchor="middle" font-weight="normal" stroke="#2e2e2e" stroke-width="0.22">1</text>
<text x="913.96" y="403.19" font-size="7.8" fill="#2e2e2e" text-anchor="middle" font-weight="normal" stroke="#2e2e2e" stroke-width="0.22">0.5</text>
<text x="929.00" y="400.20" font-size="7.8" fill="#2e2e2e" text-anchor="middle" font-weight="normal" stroke="#2e2e2e" stroke-width="0.22">0.2</text>
<text x="944.04" y="403.19" font-size="7.8" fill="#2e2e2e" text-anchor="middle" font-weight="normal" stroke="#2e2e2e" stroke-width="0.22">0.1</text>
<text x="956.79" y="411.71" font-size="7.8" fill="#2e2e2e" text-anchor="middle" font-weight="normal" stroke="#2e2e2e" stroke-width="0.22">50</text>
<text x="965.31" y="424.46" font-size="7.8" fill="#2e2e2e" text-anchor="middle" font-weight="normal" stroke="#2e2e2e" stroke-width="0.22">20</text>
<text x="968.30" y="439.50" font-size="7.8" fill="#2e2e2e" text-anchor="middle" font-weight="normal" stroke="#2e2e2e" stroke-width="0.22">10</text>
<text x="965.31" y="454.54" font-size="7.8" fill="#2e2e2e" text-anchor="middle" font-weight="normal" stroke="#2e2e2e" stroke-width="0.22">5</text>
<text x="956.79" y="467.29" font-size="7.8" fill="#2e2e2e" text-anchor="middle" font-weight="normal" stroke="#2e2e2e" stroke-width="0.22">2</text>
<text x="897.2" y="476.8" font-size="9.5" fill="#2e2e2e" text-anchor="middle" font-weight="normal" stroke="#2e2e2e" stroke-width="0.22">V</text>
<text x="961.5" y="476.8" font-size="9.5" fill="#2e2e2e" text-anchor="middle" font-weight="normal" stroke="#2e2e2e" stroke-width="0.22">mV</text>
<circle cx="929" cy="436.8" r="29.6" fill="url(#knobO)"/>
<circle cx="929" cy="436.8" r="29.6" fill="url(#knobRing)"/>
<circle cx="929" cy="436.8" r="29.6" fill="url(#knobShade)"/>
<circle cx="929.8" cy="437.6" r="16.5" fill="#5a5a5a" opacity="0.8"/>
<circle cx="929" cy="436.8" r="14.8" fill="url(#knobI)"/>
<polygon points="-4.8,0 4.7,-5.6 4.7,5.6" fill="#1e9a4a" transform="translate(907.50,436.80) rotate(0)"/>
<polygon points="-3.2,0 3,-3.6 3,3.6" fill="#1e9a4a" transform="translate(936.30,444.60) rotate(-15)"/>
<rect x="912" y="467.8" width="35.5" height="13" fill="#fff"/>
<path d="M912.5,480.8 V468.3 H947.5" fill="none" stroke="#111" stroke-width="1.3"/>
<text x="914.5" y="476.8" font-size="9.5" fill="#3a2a8a" text-anchor="start" font-weight="normal" >5</text>
<path d="M697.2,480.8 V436.3 A44,44 0 0 1 785.2,436.3 V480.8 Z" fill="#fdfdfd" stroke="#7a7a7a" stroke-width="1"/>
<line x1="756.86" y1="413.09" x2="766.92" y2="398.16" stroke="#a8a8a8" stroke-width="3.5"/>
<rect x="722.7" y="436.3" width="37.5" height="45.0" fill="#a8a8a8"/>
<line x1="722.7" y1="436.3" x2="722.7" y2="480.8" stroke="#7a7a7a" stroke-width="1"/>
<line x1="760.2" y1="436.3" x2="760.2" y2="480.8" stroke="#7a7a7a" stroke-width="1"/>
<path d="M721.42,457.51 L718.01,461.17 M716.34,451.24 L712.06,453.81 M713.19,443.81 L708.36,445.10 M712.20,436.30 L707.20,436.30 M713.32,428.31 L708.52,426.93 M716.61,420.93 L712.37,418.28 M722.17,414.41 L718.89,410.64 M728.94,410.02 L726.83,405.49 M737.16,407.58 L736.47,402.63 M744.73,407.52 L745.34,402.55 M752.53,409.61 L754.48,405.00 M761.35,415.44 L764.82,411.84 M766.06,421.36 L770.34,418.79 M769.15,428.55 L773.96,427.21 M770.20,436.30 L775.20,436.30 M769.15,444.05 L773.96,445.39 M766.06,451.24 L770.34,453.81 M760.98,457.51 L764.39,461.17" stroke="#333" stroke-width="1"/>
<text x="713.92" y="468.25" font-size="7.8" fill="#2e2e2e" text-anchor="middle" font-weight="normal" stroke="#2e2e2e" stroke-width="0.22">200</text>
<text x="706.91" y="459.60" font-size="7.8" fill="#2e2e2e" text-anchor="middle" font-weight="normal" stroke="#2e2e2e" stroke-width="0.22">100</text>
<text x="702.56" y="449.35" font-size="7.8" fill="#2e2e2e" text-anchor="middle" font-weight="normal" stroke="#2e2e2e" stroke-width="0.22">50</text>
<text x="701.20" y="439.00" font-size="7.8" fill="#2e2e2e" text-anchor="middle" font-weight="normal" stroke="#2e2e2e" stroke-width="0.22">20</text>
<text x="702.75" y="427.97" font-size="7.8" fill="#2e2e2e" text-anchor="middle" font-weight="normal" stroke="#2e2e2e" stroke-width="0.22">10</text>
<text x="707.28" y="417.80" font-size="7.8" fill="#2e2e2e" text-anchor="middle" font-weight="normal" stroke="#2e2e2e" stroke-width="0.22">5</text>
<text x="714.96" y="408.81" font-size="7.8" fill="#2e2e2e" text-anchor="middle" font-weight="normal" stroke="#2e2e2e" stroke-width="0.22">2</text>
<text x="724.30" y="402.75" font-size="7.8" fill="#2e2e2e" text-anchor="middle" font-weight="normal" stroke="#2e2e2e" stroke-width="0.22">1</text>
<text x="735.63" y="399.39" font-size="7.8" fill="#2e2e2e" text-anchor="middle" font-weight="normal" stroke="#2e2e2e" stroke-width="0.22">0.5</text>
<text x="746.07" y="399.30" font-size="7.8" fill="#2e2e2e" text-anchor="middle" font-weight="normal" stroke="#2e2e2e" stroke-width="0.22">0.2</text>
<text x="756.83" y="402.18" font-size="7.8" fill="#2e2e2e" text-anchor="middle" font-weight="normal" stroke="#2e2e2e" stroke-width="0.22">0.1</text>
<text x="768.99" y="410.23" font-size="7.8" fill="#2e2e2e" text-anchor="middle" font-weight="normal" stroke="#2e2e2e" stroke-width="0.22">50</text>
<text x="775.49" y="418.40" font-size="7.8" fill="#2e2e2e" text-anchor="middle" font-weight="normal" stroke="#2e2e2e" stroke-width="0.22">20</text>
<text x="779.75" y="428.31" font-size="7.8" fill="#2e2e2e" text-anchor="middle" font-weight="normal" stroke="#2e2e2e" stroke-width="0.22">10</text>
<text x="781.20" y="439.00" font-size="7.8" fill="#2e2e2e" text-anchor="middle" font-weight="normal" stroke="#2e2e2e" stroke-width="0.22">5</text>
<text x="779.75" y="449.69" font-size="7.8" fill="#2e2e2e" text-anchor="middle" font-weight="normal" stroke="#2e2e2e" stroke-width="0.22">2</text>
<text x="775.49" y="459.60" font-size="7.8" fill="#2e2e2e" text-anchor="middle" font-weight="normal" stroke="#2e2e2e" stroke-width="0.22">1</text>
<text x="768.48" y="468.25" font-size="7.8" fill="#2e2e2e" text-anchor="middle" font-weight="normal" stroke="#2e2e2e" stroke-width="0.22">0.5</text>
<text x="709.4000000000001" y="476.3" font-size="9.5" fill="#2e2e2e" text-anchor="middle" font-weight="normal" stroke="#2e2e2e" stroke-width="0.22">ms</text>
<text x="773.7" y="476.3" font-size="9.5" fill="#2e2e2e" text-anchor="middle" font-weight="normal" stroke="#2e2e2e" stroke-width="0.22">μs</text>
<circle cx="741.2" cy="436.3" r="29.6" fill="url(#knobO)"/>
<circle cx="741.2" cy="436.3" r="29.6" fill="url(#knobRing)"/>
<circle cx="741.2" cy="436.3" r="29.6" fill="url(#knobShade)"/>
<circle cx="742.0" cy="437.1" r="16.5" fill="#5a5a5a" opacity="0.8"/>
<circle cx="741.2" cy="436.3" r="14.8" fill="url(#knobI)"/>
<polygon points="-4.8,0 4.7,-5.6 4.7,5.6" fill="#e8842e" transform="translate(732.11,416.81) rotate(65)"/>
<polygon points="-3.2,0 3,-3.6 3,3.6" fill="#e8842e" transform="translate(748.50,444.10) rotate(-15)"/>
<rect x="724.2" y="467.3" width="35.5" height="13" fill="#fff"/>
<path d="M724.7,480.3 V467.8 H759.7" fill="none" stroke="#111" stroke-width="1.3"/>
<text x="726.7" y="476.3" font-size="9.5" fill="#3a2a8a" text-anchor="start" font-weight="normal" >1m</text>
</svg></body></html>
